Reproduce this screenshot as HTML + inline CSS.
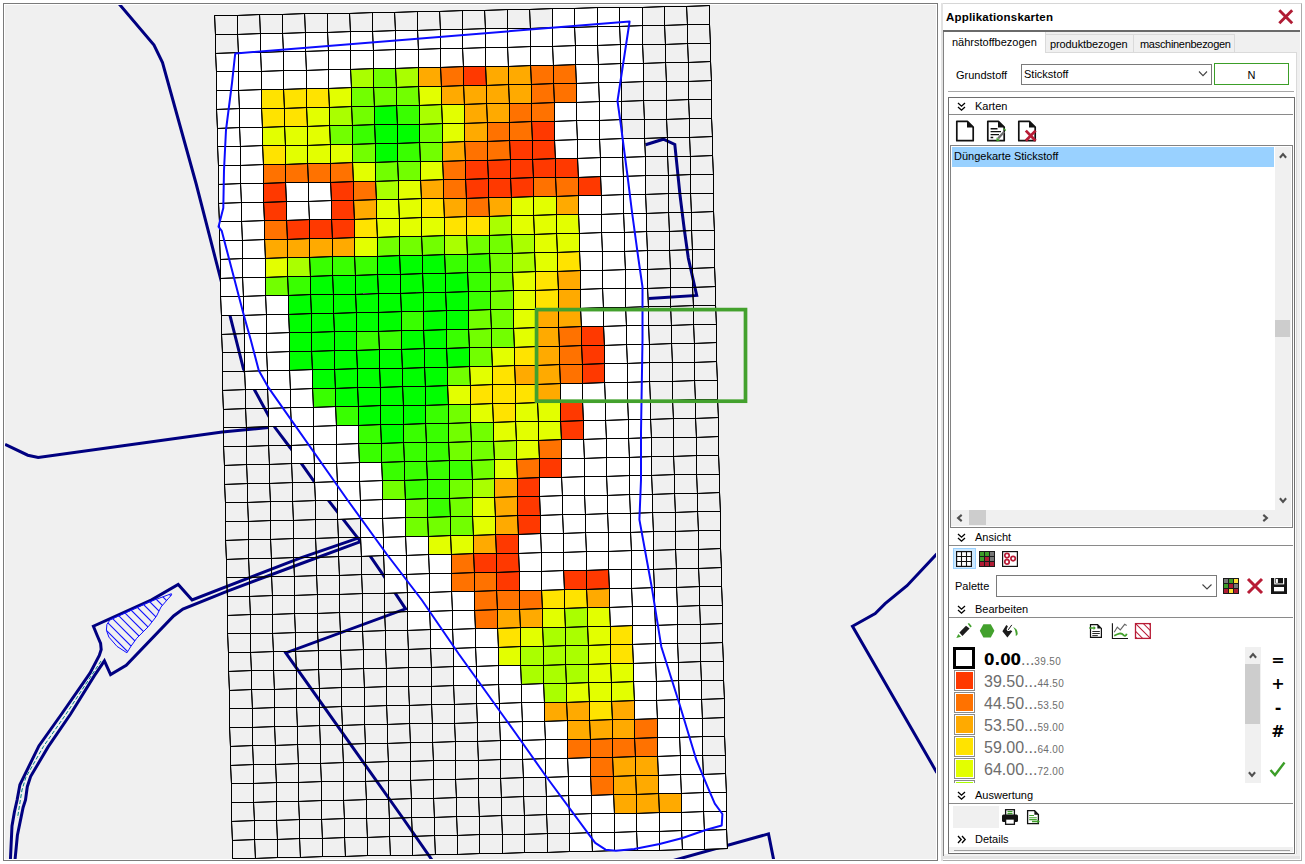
<!DOCTYPE html>
<html><head><meta charset="utf-8"><title>Applikationskarten</title>
<style>
html,body{margin:0;padding:0;background:#fff;}
body{width:1305px;height:864px;position:relative;overflow:hidden;font-family:"Liberation Sans",sans-serif;font-size:11px;color:#000;}
.abs,#rp div,#rp span,#rp svg{position:absolute;}
#mapframe{position:absolute;left:3px;top:3px;width:933px;height:856px;border:1px solid #7a7a7a;background:#fff;}
#mapbg{position:absolute;left:1px;top:1px;width:931px;height:854px;background:#f0f0f0;overflow:hidden;}
svg.map{position:absolute;left:0;top:0;}
#rp{position:absolute;left:0;top:0;width:1305px;height:864px;}
.t{white-space:nowrap;line-height:14px;height:14px;}
.hl{height:1px;background:#a0a0a0;}
.hd{font-size:11px;}
.leg{white-space:nowrap;color:#6d6d6d;font-size:16px;line-height:20px;height:20px;}
.leg small{font-size:10px;letter-spacing:0.35px;}
.sw{width:17px;height:17px;border:1px solid #fff;outline:1px solid #8a8a8a;}
.op{font-family:"DejaVu Sans",sans-serif;font-weight:bold;font-size:16px;line-height:20px;width:24px;text-align:center;}
</style></head><body>
<div id="mapframe"><div id="mapbg">
<svg class="map" width="932" height="855" viewBox="5 5 932 855">
<defs><clipPath id="hc"><polygon points="171.4,593.7 149.4,601.8 110.1,619.8 106.9,624.4 106.4,630.2 108.9,637.1 117,646.4 126.9,652.8 130.9,646.4 136.7,638.3 148.3,626.7 156.4,616.3 161,607 168,598.9 171.6,594.9"/></clipPath></defs>
<g fill="none" stroke="#000080" stroke-width="3" stroke-linejoin="miter">
<polyline points="115.8,0 154,45 162.5,62.5 181.2,130 196.2,184 220,276.5 230.2,316.3 243.5,369 255,390.8 267.5,413.8 274.8,427.3 290.4,448 313.3,480.4 329.6,501.9 358.8,539.4 383.8,575.8 405.6,608.8 285.8,652.9 403.5,819 432,860"/>
<polyline points="5.1,444.4 27.8,455.2 38.2,457.5 222.2,432 268.5,427.5"/>
<polyline points="358.8,537.9 300,558.2 192.1,599.9 178.2,584.4 151.6,599.9 93.4,626.2 97.4,636 100.6,643.5 101.2,649.5 99.3,655.5 90,673.1 61.6,714 38.9,745.9 19.9,784.8 17.1,800 14.4,812 12,826 10.4,860"/>
<polyline points="359.8,541.9 300,564 226.9,591.3 182.9,609.1 173.6,616 126.2,665.4 110.6,674.6 104.4,660.8 94.4,675.6 70.6,714 48.1,746.9 30.6,776.5 27.3,786.7 25.5,800 23.1,807.5 17.4,835.3 15,860"/>
<polyline points="936.9,553.8 907,585.7 885.1,603.6 875.2,613.5 852.5,626.3 936.9,772.7"/>
<polyline points="660,864.2 768.5,833.9 773.7,860"/>
<polyline points="645.6,144.8 663.3,139.2 674.8,144.4 680,195 684.2,228.8 688.3,258 696.7,295.4 648.8,298.5"/>
</g>
<polyline fill="none" stroke="#008080" stroke-width="1" stroke-dasharray="4 2" points="101,661 92.2,674.4 66.1,714 43.5,746.4 26,777 22,790 17.5,818"/>
<g clip-path="url(#hc)" stroke="#1010ff" stroke-width="1.15">
<line x1="-7" y1="580" x2="93" y2="680"/>
<line x1="2" y1="580" x2="102" y2="680"/>
<line x1="11" y1="580" x2="111" y2="680"/>
<line x1="20" y1="580" x2="120" y2="680"/>
<line x1="29" y1="580" x2="129" y2="680"/>
<line x1="38" y1="580" x2="138" y2="680"/>
<line x1="47" y1="580" x2="147" y2="680"/>
<line x1="56" y1="580" x2="156" y2="680"/>
<line x1="65" y1="580" x2="165" y2="680"/>
<line x1="74" y1="580" x2="174" y2="680"/>
<line x1="83" y1="580" x2="183" y2="680"/>
<line x1="92" y1="580" x2="192" y2="680"/>
<line x1="101" y1="580" x2="201" y2="680"/>
<line x1="110" y1="580" x2="210" y2="680"/>
<line x1="119" y1="580" x2="219" y2="680"/>
<line x1="128" y1="580" x2="228" y2="680"/>
<line x1="137" y1="580" x2="237" y2="680"/>
<line x1="146" y1="580" x2="246" y2="680"/>
<line x1="155" y1="580" x2="255" y2="680"/>
<line x1="164" y1="580" x2="264" y2="680"/>
<line x1="173" y1="580" x2="273" y2="680"/>
<line x1="182" y1="580" x2="282" y2="680"/>
<line x1="191" y1="580" x2="291" y2="680"/>
<line x1="200" y1="580" x2="300" y2="680"/>
<line x1="209" y1="580" x2="309" y2="680"/>
<line x1="218" y1="580" x2="318" y2="680"/>
<line x1="227" y1="580" x2="327" y2="680"/>
<line x1="236" y1="580" x2="336" y2="680"/>
<line x1="245" y1="580" x2="345" y2="680"/>
<line x1="254" y1="580" x2="354" y2="680"/>
<line x1="263" y1="580" x2="363" y2="680"/>
<line x1="272" y1="580" x2="372" y2="680"/>
</g>
<polygon fill="none" stroke="#1010ff" stroke-width="1" points="171.4,593.7 149.4,601.8 110.1,619.8 106.9,624.4 106.4,630.2 108.9,637.1 117,646.4 126.9,652.8 130.9,646.4 136.7,638.3 148.3,626.7 156.4,616.3 161,607 168,598.9 171.6,594.9"/>
<g shape-rendering="crispEdges">
<polygon fill="#ffffff" points="552.5,8.5 642.5,7.5 642.5,25.5 552.5,27.5"/>
<polygon fill="#ffffff" points="237.5,34.5 642.5,25.5 642.5,44.5 238.5,52.5"/>
<polygon fill="#ffffff" points="215.5,53.5 642.5,44.5 643.5,63.5 216.5,71.5"/>
<polygon fill="#ffffff" points="216.5,71.5 350.5,69.5 351.5,87.5 216.5,90.5"/>
<polygon fill="#aaff00" points="350.5,69.5 373.5,68.5 373.5,87.5 351.5,87.5"/>
<polygon fill="#72ff00" points="373.5,68.5 395.5,68.5 396.5,87.5 373.5,87.5"/>
<polygon fill="#aaff00" points="395.5,68.5 418.5,67.5 418.5,86.5 396.5,87.5"/>
<polygon fill="#ffaa00" points="418.5,67.5 440.5,67.5 441.5,86.5 418.5,86.5"/>
<polygon fill="#ff7200" points="440.5,67.5 463.5,66.5 463.5,85.5 441.5,86.5"/>
<polygon fill="#ff3900" points="463.5,66.5 485.5,66.5 486.5,85.5 463.5,85.5"/>
<polygon fill="#ffaa00" points="485.5,66.5 530.5,65.5 531.5,84.5 486.5,85.5"/>
<polygon fill="#ff7200" points="530.5,65.5 575.5,64.5 576.5,83.5 531.5,84.5"/>
<polygon fill="#ffffff" points="575.5,64.5 643.5,63.5 643.5,81.5 576.5,83.5"/>
<polygon fill="#ffffff" points="216.5,90.5 261.5,89.5 261.5,108.5 216.5,109.5"/>
<polygon fill="#ffe300" points="261.5,89.5 328.5,88.5 329.5,107.5 261.5,108.5"/>
<polygon fill="#e3ff00" points="328.5,88.5 351.5,87.5 351.5,106.5 329.5,107.5"/>
<polygon fill="#72ff00" points="351.5,87.5 418.5,86.5 419.5,105.5 351.5,106.5"/>
<polygon fill="#e3ff00" points="418.5,86.5 441.5,86.5 441.5,104.5 419.5,105.5"/>
<polygon fill="#ffaa00" points="441.5,86.5 531.5,84.5 531.5,103.5 441.5,104.5"/>
<polygon fill="#ff7200" points="531.5,84.5 576.5,83.5 576.5,102.5 531.5,103.5"/>
<polygon fill="#ffffff" points="576.5,83.5 621.5,82.5 621.5,101.5 576.5,102.5"/>
<polygon fill="#ffffff" points="216.5,109.5 261.5,108.5 262.5,127.5 217.5,128.5"/>
<polygon fill="#ffe300" points="261.5,108.5 306.5,107.5 307.5,126.5 262.5,127.5"/>
<polygon fill="#e3ff00" points="306.5,107.5 329.5,107.5 329.5,125.5 307.5,126.5"/>
<polygon fill="#aaff00" points="329.5,107.5 351.5,106.5 352.5,125.5 329.5,125.5"/>
<polygon fill="#72ff00" points="351.5,106.5 374.5,106.5 374.5,124.5 352.5,125.5"/>
<polygon fill="#00ff00" points="374.5,106.5 396.5,105.5 397.5,124.5 374.5,124.5"/>
<polygon fill="#39ff00" points="396.5,105.5 419.5,105.5 419.5,124.5 397.5,124.5"/>
<polygon fill="#aaff00" points="419.5,105.5 441.5,104.5 442.5,123.5 419.5,124.5"/>
<polygon fill="#e3ff00" points="441.5,104.5 464.5,104.5 464.5,123.5 442.5,123.5"/>
<polygon fill="#ffaa00" points="464.5,104.5 509.5,103.5 509.5,122.5 464.5,123.5"/>
<polygon fill="#ff7200" points="509.5,103.5 554.5,102.5 554.5,121.5 509.5,122.5"/>
<polygon fill="#ffffff" points="554.5,102.5 621.5,101.5 621.5,119.5 554.5,121.5"/>
<polygon fill="#ffffff" points="217.5,128.5 262.5,127.5 262.5,145.5 217.5,146.5"/>
<polygon fill="#e3ff00" points="262.5,127.5 329.5,125.5 330.5,144.5 262.5,145.5"/>
<polygon fill="#72ff00" points="329.5,125.5 352.5,125.5 352.5,144.5 330.5,144.5"/>
<polygon fill="#39ff00" points="352.5,125.5 374.5,124.5 375.5,143.5 352.5,144.5"/>
<polygon fill="#00ff00" points="374.5,124.5 419.5,124.5 419.5,142.5 375.5,143.5"/>
<polygon fill="#72ff00" points="419.5,124.5 442.5,123.5 442.5,142.5 419.5,142.5"/>
<polygon fill="#e3ff00" points="442.5,123.5 464.5,123.5 464.5,141.5 442.5,142.5"/>
<polygon fill="#ffaa00" points="464.5,123.5 487.5,122.5 487.5,141.5 464.5,141.5"/>
<polygon fill="#ff7200" points="487.5,122.5 531.5,121.5 532.5,140.5 487.5,141.5"/>
<polygon fill="#ff3900" points="531.5,121.5 554.5,121.5 554.5,140.5 532.5,140.5"/>
<polygon fill="#ffffff" points="554.5,121.5 621.5,119.5 622.5,138.5 554.5,140.5"/>
<polygon fill="#ffffff" points="217.5,146.5 262.5,145.5 263.5,164.5 218.5,165.5"/>
<polygon fill="#ffe300" points="262.5,145.5 285.5,145.5 285.5,164.5 263.5,164.5"/>
<polygon fill="#e3ff00" points="285.5,145.5 352.5,144.5 352.5,162.5 285.5,164.5"/>
<polygon fill="#72ff00" points="352.5,144.5 375.5,143.5 375.5,162.5 352.5,162.5"/>
<polygon fill="#00ff00" points="375.5,143.5 397.5,143.5 397.5,161.5 375.5,162.5"/>
<polygon fill="#39ff00" points="397.5,143.5 419.5,142.5 420.5,161.5 397.5,161.5"/>
<polygon fill="#72ff00" points="419.5,142.5 442.5,142.5 442.5,161.5 420.5,161.5"/>
<polygon fill="#ffaa00" points="442.5,142.5 464.5,141.5 465.5,160.5 442.5,161.5"/>
<polygon fill="#ff7200" points="464.5,141.5 509.5,140.5 510.5,159.5 465.5,160.5"/>
<polygon fill="#ff3900" points="509.5,140.5 554.5,140.5 555.5,158.5 510.5,159.5"/>
<polygon fill="#ffffff" points="554.5,140.5 644.5,138.5 645.5,156.5 555.5,158.5"/>
<polygon fill="#ffffff" points="218.5,165.5 263.5,164.5 263.5,183.5 218.5,184.5"/>
<polygon fill="#ff7200" points="263.5,164.5 352.5,162.5 353.5,181.5 263.5,183.5"/>
<polygon fill="#e3ff00" points="352.5,162.5 375.5,162.5 375.5,181.5 353.5,181.5"/>
<polygon fill="#72ff00" points="375.5,162.5 420.5,161.5 420.5,180.5 375.5,181.5"/>
<polygon fill="#e3ff00" points="420.5,161.5 442.5,161.5 443.5,179.5 420.5,180.5"/>
<polygon fill="#ff7200" points="442.5,161.5 465.5,160.5 465.5,179.5 443.5,179.5"/>
<polygon fill="#ff3900" points="465.5,160.5 577.5,158.5 578.5,177.5 465.5,179.5"/>
<polygon fill="#ffffff" points="577.5,158.5 645.5,156.5 645.5,175.5 578.5,177.5"/>
<polygon fill="#ffffff" points="218.5,184.5 263.5,183.5 263.5,202.5 218.5,203.5"/>
<polygon fill="#ff3900" points="263.5,183.5 285.5,182.5 286.5,201.5 263.5,202.5"/>
<polygon fill="#ffffff" points="285.5,182.5 330.5,182.5 331.5,200.5 286.5,201.5"/>
<polygon fill="#ff3900" points="330.5,182.5 353.5,181.5 353.5,200.5 331.5,200.5"/>
<polygon fill="#ff7200" points="353.5,181.5 375.5,181.5 376.5,199.5 353.5,200.5"/>
<polygon fill="#aaff00" points="375.5,181.5 398.5,180.5 398.5,199.5 376.5,199.5"/>
<polygon fill="#e3ff00" points="398.5,180.5 420.5,180.5 421.5,198.5 398.5,199.5"/>
<polygon fill="#ffaa00" points="420.5,180.5 443.5,179.5 443.5,198.5 421.5,198.5"/>
<polygon fill="#ff7200" points="443.5,179.5 465.5,179.5 466.5,198.5 443.5,198.5"/>
<polygon fill="#ff3900" points="465.5,179.5 533.5,177.5 533.5,196.5 466.5,198.5"/>
<polygon fill="#ff7200" points="533.5,177.5 578.5,177.5 578.5,195.5 533.5,196.5"/>
<polygon fill="#ff3900" points="578.5,177.5 600.5,176.5 601.5,195.5 578.5,195.5"/>
<polygon fill="#ffffff" points="600.5,176.5 645.5,175.5 645.5,194.5 601.5,195.5"/>
<polygon fill="#ffffff" points="218.5,203.5 263.5,202.5 264.5,220.5 219.5,221.5"/>
<polygon fill="#ff3900" points="263.5,202.5 286.5,201.5 286.5,220.5 264.5,220.5"/>
<polygon fill="#ffffff" points="286.5,201.5 331.5,200.5 331.5,219.5 286.5,220.5"/>
<polygon fill="#ff3900" points="331.5,200.5 353.5,200.5 354.5,219.5 331.5,219.5"/>
<polygon fill="#ffaa00" points="353.5,200.5 376.5,199.5 376.5,218.5 354.5,219.5"/>
<polygon fill="#e3ff00" points="376.5,199.5 421.5,198.5 421.5,217.5 376.5,218.5"/>
<polygon fill="#ffe300" points="421.5,198.5 443.5,198.5 444.5,217.5 421.5,217.5"/>
<polygon fill="#ffaa00" points="443.5,198.5 466.5,198.5 466.5,216.5 444.5,217.5"/>
<polygon fill="#ff7200" points="466.5,198.5 488.5,197.5 489.5,216.5 466.5,216.5"/>
<polygon fill="#ffaa00" points="488.5,197.5 511.5,197.5 511.5,215.5 489.5,216.5"/>
<polygon fill="#e3ff00" points="511.5,197.5 556.5,196.5 556.5,214.5 511.5,215.5"/>
<polygon fill="#ffaa00" points="556.5,196.5 578.5,195.5 578.5,214.5 556.5,214.5"/>
<polygon fill="#ffffff" points="578.5,195.5 645.5,194.5 646.5,213.5 578.5,214.5"/>
<polygon fill="#ffffff" points="219.5,221.5 264.5,220.5 264.5,239.5 219.5,240.5"/>
<polygon fill="#ff7200" points="264.5,220.5 286.5,220.5 287.5,239.5 264.5,239.5"/>
<polygon fill="#ff3900" points="286.5,220.5 354.5,219.5 354.5,237.5 287.5,239.5"/>
<polygon fill="#ffe300" points="354.5,219.5 376.5,218.5 377.5,237.5 354.5,237.5"/>
<polygon fill="#e3ff00" points="376.5,218.5 444.5,217.5 444.5,235.5 377.5,237.5"/>
<polygon fill="#ffe300" points="444.5,217.5 489.5,216.5 489.5,235.5 444.5,235.5"/>
<polygon fill="#aaff00" points="489.5,216.5 511.5,215.5 511.5,234.5 489.5,235.5"/>
<polygon fill="#e3ff00" points="511.5,215.5 578.5,214.5 579.5,233.5 511.5,234.5"/>
<polygon fill="#ffffff" points="578.5,214.5 646.5,213.5 646.5,231.5 579.5,233.5"/>
<polygon fill="#ffffff" points="219.5,240.5 264.5,239.5 265.5,258.5 220.5,259.5"/>
<polygon fill="#ffaa00" points="264.5,239.5 354.5,237.5 354.5,256.5 265.5,258.5"/>
<polygon fill="#e3ff00" points="354.5,237.5 377.5,237.5 377.5,256.5 354.5,256.5"/>
<polygon fill="#72ff00" points="377.5,237.5 444.5,235.5 444.5,254.5 377.5,256.5"/>
<polygon fill="#aaff00" points="444.5,235.5 466.5,235.5 467.5,254.5 444.5,254.5"/>
<polygon fill="#72ff00" points="466.5,235.5 511.5,234.5 512.5,253.5 467.5,254.5"/>
<polygon fill="#aaff00" points="511.5,234.5 534.5,234.5 534.5,252.5 512.5,253.5"/>
<polygon fill="#e3ff00" points="534.5,234.5 579.5,233.5 579.5,251.5 534.5,252.5"/>
<polygon fill="#ffffff" points="579.5,233.5 646.5,231.5 647.5,250.5 579.5,251.5"/>
<polygon fill="#ffffff" points="220.5,259.5 265.5,258.5 265.5,277.5 220.5,278.5"/>
<polygon fill="#e3ff00" points="265.5,258.5 287.5,257.5 287.5,276.5 265.5,277.5"/>
<polygon fill="#aaff00" points="287.5,257.5 309.5,257.5 310.5,276.5 287.5,276.5"/>
<polygon fill="#39ff00" points="309.5,257.5 377.5,256.5 377.5,274.5 310.5,276.5"/>
<polygon fill="#00ff00" points="377.5,256.5 444.5,254.5 445.5,273.5 377.5,274.5"/>
<polygon fill="#39ff00" points="444.5,254.5 489.5,253.5 490.5,272.5 445.5,273.5"/>
<polygon fill="#72ff00" points="489.5,253.5 512.5,253.5 512.5,272.5 490.5,272.5"/>
<polygon fill="#aaff00" points="512.5,253.5 534.5,252.5 535.5,271.5 512.5,272.5"/>
<polygon fill="#e3ff00" points="534.5,252.5 557.5,252.5 557.5,271.5 535.5,271.5"/>
<polygon fill="#ffe300" points="557.5,252.5 579.5,251.5 580.5,270.5 557.5,271.5"/>
<polygon fill="#ffffff" points="579.5,251.5 647.5,250.5 647.5,269.5 580.5,270.5"/>
<polygon fill="#ffffff" points="220.5,278.5 265.5,277.5 265.5,295.5 220.5,296.5"/>
<polygon fill="#72ff00" points="265.5,277.5 287.5,276.5 288.5,295.5 265.5,295.5"/>
<polygon fill="#39ff00" points="287.5,276.5 310.5,276.5 310.5,294.5 288.5,295.5"/>
<polygon fill="#00ff00" points="310.5,276.5 467.5,272.5 468.5,291.5 310.5,294.5"/>
<polygon fill="#39ff00" points="467.5,272.5 490.5,272.5 490.5,291.5 468.5,291.5"/>
<polygon fill="#72ff00" points="490.5,272.5 512.5,272.5 513.5,290.5 490.5,291.5"/>
<polygon fill="#e3ff00" points="512.5,272.5 535.5,271.5 535.5,290.5 513.5,290.5"/>
<polygon fill="#ffe300" points="535.5,271.5 557.5,271.5 558.5,289.5 535.5,290.5"/>
<polygon fill="#ffaa00" points="557.5,271.5 580.5,270.5 580.5,289.5 558.5,289.5"/>
<polygon fill="#ffffff" points="580.5,270.5 647.5,269.5 647.5,288.5 580.5,289.5"/>
<polygon fill="#ffffff" points="220.5,296.5 288.5,295.5 288.5,314.5 221.5,315.5"/>
<polygon fill="#00ff00" points="288.5,295.5 468.5,291.5 468.5,310.5 288.5,314.5"/>
<polygon fill="#39ff00" points="468.5,291.5 490.5,291.5 490.5,309.5 468.5,310.5"/>
<polygon fill="#72ff00" points="490.5,291.5 513.5,290.5 513.5,309.5 490.5,309.5"/>
<polygon fill="#e3ff00" points="513.5,290.5 535.5,290.5 535.5,309.5 513.5,309.5"/>
<polygon fill="#ffe300" points="535.5,290.5 558.5,289.5 558.5,308.5 535.5,309.5"/>
<polygon fill="#ffaa00" points="558.5,289.5 580.5,289.5 580.5,308.5 558.5,308.5"/>
<polygon fill="#ffffff" points="580.5,289.5 647.5,288.5 648.5,306.5 580.5,308.5"/>
<polygon fill="#ffffff" points="243.5,315.5 288.5,314.5 289.5,332.5 244.5,333.5"/>
<polygon fill="#00ff00" points="288.5,314.5 401.5,311.5 401.5,330.5 289.5,332.5"/>
<polygon fill="#39ff00" points="401.5,311.5 423.5,311.5 423.5,330.5 401.5,330.5"/>
<polygon fill="#00ff00" points="423.5,311.5 468.5,310.5 468.5,329.5 423.5,330.5"/>
<polygon fill="#72ff00" points="468.5,310.5 513.5,309.5 513.5,328.5 468.5,329.5"/>
<polygon fill="#e3ff00" points="513.5,309.5 535.5,309.5 536.5,327.5 513.5,328.5"/>
<polygon fill="#ffaa00" points="535.5,309.5 580.5,308.5 581.5,326.5 536.5,327.5"/>
<polygon fill="#ffffff" points="580.5,308.5 648.5,306.5 648.5,325.5 581.5,326.5"/>
<polygon fill="#ffffff" points="244.5,333.5 289.5,332.5 289.5,351.5 244.5,352.5"/>
<polygon fill="#00ff00" points="289.5,332.5 356.5,331.5 356.5,350.5 289.5,351.5"/>
<polygon fill="#39ff00" points="356.5,331.5 401.5,330.5 401.5,349.5 356.5,350.5"/>
<polygon fill="#00ff00" points="401.5,330.5 446.5,329.5 446.5,348.5 401.5,349.5"/>
<polygon fill="#39ff00" points="446.5,329.5 468.5,329.5 469.5,347.5 446.5,348.5"/>
<polygon fill="#72ff00" points="468.5,329.5 513.5,328.5 514.5,347.5 469.5,347.5"/>
<polygon fill="#e3ff00" points="513.5,328.5 536.5,327.5 536.5,346.5 514.5,347.5"/>
<polygon fill="#ffaa00" points="536.5,327.5 558.5,327.5 559.5,346.5 536.5,346.5"/>
<polygon fill="#ff7200" points="558.5,327.5 581.5,326.5 581.5,345.5 559.5,346.5"/>
<polygon fill="#ff3900" points="581.5,326.5 603.5,326.5 604.5,345.5 581.5,345.5"/>
<polygon fill="#ffffff" points="603.5,326.5 648.5,325.5 649.5,344.5 604.5,345.5"/>
<polygon fill="#ffffff" points="244.5,352.5 289.5,351.5 289.5,370.5 244.5,371.5"/>
<polygon fill="#00ff00" points="289.5,351.5 469.5,347.5 469.5,366.5 289.5,370.5"/>
<polygon fill="#72ff00" points="469.5,347.5 491.5,347.5 492.5,366.5 469.5,366.5"/>
<polygon fill="#e3ff00" points="491.5,347.5 514.5,347.5 514.5,365.5 492.5,366.5"/>
<polygon fill="#ffe300" points="514.5,347.5 536.5,346.5 537.5,365.5 514.5,365.5"/>
<polygon fill="#ffaa00" points="536.5,346.5 559.5,346.5 559.5,364.5 537.5,365.5"/>
<polygon fill="#ff7200" points="559.5,346.5 581.5,345.5 582.5,364.5 559.5,364.5"/>
<polygon fill="#ff3900" points="581.5,345.5 604.5,345.5 604.5,363.5 582.5,364.5"/>
<polygon fill="#ffffff" points="604.5,345.5 649.5,344.5 649.5,362.5 604.5,363.5"/>
<polygon fill="#ffffff" points="244.5,371.5 312.5,369.5 312.5,388.5 245.5,389.5"/>
<polygon fill="#00ff00" points="312.5,369.5 447.5,367.5 447.5,385.5 312.5,388.5"/>
<polygon fill="#72ff00" points="447.5,367.5 469.5,366.5 470.5,385.5 447.5,385.5"/>
<polygon fill="#e3ff00" points="469.5,366.5 492.5,366.5 492.5,384.5 470.5,385.5"/>
<polygon fill="#ffe300" points="492.5,366.5 514.5,365.5 515.5,384.5 492.5,384.5"/>
<polygon fill="#ffaa00" points="514.5,365.5 559.5,364.5 560.5,383.5 515.5,384.5"/>
<polygon fill="#ff7200" points="559.5,364.5 582.5,364.5 582.5,383.5 560.5,383.5"/>
<polygon fill="#ff3900" points="582.5,364.5 604.5,363.5 604.5,382.5 582.5,383.5"/>
<polygon fill="#ffffff" points="604.5,363.5 649.5,362.5 649.5,381.5 604.5,382.5"/>
<polygon fill="#ffffff" points="267.5,389.5 312.5,388.5 313.5,407.5 268.5,408.5"/>
<polygon fill="#39ff00" points="312.5,388.5 335.5,388.5 335.5,406.5 313.5,407.5"/>
<polygon fill="#00ff00" points="335.5,388.5 447.5,385.5 448.5,404.5 335.5,406.5"/>
<polygon fill="#e3ff00" points="447.5,385.5 470.5,385.5 470.5,404.5 448.5,404.5"/>
<polygon fill="#ffe300" points="470.5,385.5 537.5,384.5 537.5,402.5 470.5,404.5"/>
<polygon fill="#ffaa00" points="537.5,384.5 560.5,383.5 560.5,402.5 537.5,402.5"/>
<polygon fill="#ffffff" points="560.5,383.5 649.5,381.5 650.5,400.5 560.5,402.5"/>
<polygon fill="#ffffff" points="268.5,408.5 335.5,406.5 336.5,425.5 268.5,426.5"/>
<polygon fill="#39ff00" points="335.5,406.5 358.5,406.5 358.5,425.5 336.5,425.5"/>
<polygon fill="#00ff00" points="358.5,406.5 425.5,405.5 425.5,423.5 358.5,425.5"/>
<polygon fill="#39ff00" points="425.5,405.5 448.5,404.5 448.5,423.5 425.5,423.5"/>
<polygon fill="#72ff00" points="448.5,404.5 470.5,404.5 470.5,422.5 448.5,423.5"/>
<polygon fill="#e3ff00" points="470.5,404.5 492.5,403.5 493.5,422.5 470.5,422.5"/>
<polygon fill="#ffe300" points="492.5,403.5 515.5,403.5 515.5,421.5 493.5,422.5"/>
<polygon fill="#e3ff00" points="515.5,403.5 560.5,402.5 560.5,421.5 515.5,421.5"/>
<polygon fill="#ff3900" points="560.5,402.5 582.5,401.5 583.5,420.5 560.5,421.5"/>
<polygon fill="#ffffff" points="582.5,401.5 650.5,400.5 650.5,419.5 583.5,420.5"/>
<polygon fill="#ffffff" points="291.5,426.5 358.5,425.5 358.5,443.5 291.5,445.5"/>
<polygon fill="#39ff00" points="358.5,425.5 380.5,424.5 381.5,443.5 358.5,443.5"/>
<polygon fill="#00ff00" points="380.5,424.5 403.5,424.5 403.5,442.5 381.5,443.5"/>
<polygon fill="#39ff00" points="403.5,424.5 448.5,423.5 448.5,442.5 403.5,442.5"/>
<polygon fill="#72ff00" points="448.5,423.5 493.5,422.5 493.5,441.5 448.5,442.5"/>
<polygon fill="#e3ff00" points="493.5,422.5 560.5,421.5 561.5,439.5 493.5,441.5"/>
<polygon fill="#ff3900" points="560.5,421.5 583.5,420.5 583.5,439.5 561.5,439.5"/>
<polygon fill="#ffffff" points="583.5,420.5 650.5,419.5 651.5,437.5 583.5,439.5"/>
<polygon fill="#ffffff" points="291.5,445.5 358.5,443.5 359.5,462.5 291.5,463.5"/>
<polygon fill="#39ff00" points="358.5,443.5 448.5,442.5 449.5,460.5 359.5,462.5"/>
<polygon fill="#72ff00" points="448.5,442.5 493.5,441.5 494.5,459.5 449.5,460.5"/>
<polygon fill="#aaff00" points="493.5,441.5 516.5,440.5 516.5,459.5 494.5,459.5"/>
<polygon fill="#e3ff00" points="516.5,440.5 538.5,440.5 539.5,458.5 516.5,459.5"/>
<polygon fill="#ff7200" points="538.5,440.5 561.5,439.5 561.5,458.5 539.5,458.5"/>
<polygon fill="#ffffff" points="561.5,439.5 651.5,437.5 651.5,456.5 561.5,458.5"/>
<polygon fill="#ffffff" points="314.5,463.5 381.5,462.5 382.5,480.5 314.5,482.5"/>
<polygon fill="#39ff00" points="381.5,462.5 471.5,460.5 472.5,479.5 382.5,480.5"/>
<polygon fill="#72ff00" points="471.5,460.5 494.5,459.5 494.5,478.5 472.5,479.5"/>
<polygon fill="#e3ff00" points="494.5,459.5 516.5,459.5 517.5,478.5 494.5,478.5"/>
<polygon fill="#ff7200" points="516.5,459.5 539.5,458.5 539.5,477.5 517.5,478.5"/>
<polygon fill="#ff3900" points="539.5,458.5 561.5,458.5 561.5,477.5 539.5,477.5"/>
<polygon fill="#ffffff" points="561.5,458.5 651.5,456.5 651.5,475.5 561.5,477.5"/>
<polygon fill="#ffffff" points="314.5,482.5 382.5,480.5 382.5,499.5 315.5,500.5"/>
<polygon fill="#72ff00" points="382.5,480.5 404.5,480.5 405.5,499.5 382.5,499.5"/>
<polygon fill="#39ff00" points="404.5,480.5 449.5,479.5 449.5,498.5 405.5,499.5"/>
<polygon fill="#72ff00" points="449.5,479.5 472.5,479.5 472.5,497.5 449.5,498.5"/>
<polygon fill="#aaff00" points="472.5,479.5 494.5,478.5 494.5,497.5 472.5,497.5"/>
<polygon fill="#ffaa00" points="494.5,478.5 517.5,478.5 517.5,496.5 494.5,497.5"/>
<polygon fill="#ff3900" points="517.5,478.5 539.5,477.5 539.5,496.5 517.5,496.5"/>
<polygon fill="#ffffff" points="539.5,477.5 651.5,475.5 652.5,494.5 539.5,496.5"/>
<polygon fill="#ffffff" points="337.5,500.5 405.5,499.5 405.5,517.5 337.5,519.5"/>
<polygon fill="#72ff00" points="405.5,499.5 427.5,498.5 427.5,517.5 405.5,517.5"/>
<polygon fill="#39ff00" points="427.5,498.5 449.5,498.5 450.5,516.5 427.5,517.5"/>
<polygon fill="#72ff00" points="449.5,498.5 472.5,497.5 472.5,516.5 450.5,516.5"/>
<polygon fill="#e3ff00" points="472.5,497.5 494.5,497.5 495.5,516.5 472.5,516.5"/>
<polygon fill="#ffaa00" points="494.5,497.5 517.5,496.5 517.5,515.5 495.5,516.5"/>
<polygon fill="#ff3900" points="517.5,496.5 539.5,496.5 540.5,515.5 517.5,515.5"/>
<polygon fill="#ffffff" points="539.5,496.5 652.5,494.5 652.5,512.5 540.5,515.5"/>
<polygon fill="#ffffff" points="360.5,518.5 405.5,517.5 405.5,536.5 360.5,537.5"/>
<polygon fill="#72ff00" points="405.5,517.5 472.5,516.5 473.5,535.5 405.5,536.5"/>
<polygon fill="#e3ff00" points="472.5,516.5 495.5,516.5 495.5,534.5 473.5,535.5"/>
<polygon fill="#ffaa00" points="495.5,516.5 517.5,515.5 518.5,534.5 495.5,534.5"/>
<polygon fill="#ff3900" points="517.5,515.5 540.5,515.5 540.5,533.5 518.5,534.5"/>
<polygon fill="#ffffff" points="540.5,515.5 652.5,512.5 653.5,531.5 540.5,533.5"/>
<polygon fill="#ffffff" points="360.5,537.5 428.5,536.5 428.5,554.5 361.5,556.5"/>
<polygon fill="#e3ff00" points="428.5,536.5 473.5,535.5 473.5,553.5 428.5,554.5"/>
<polygon fill="#ffaa00" points="473.5,535.5 495.5,534.5 496.5,553.5 473.5,553.5"/>
<polygon fill="#ff3900" points="495.5,534.5 518.5,534.5 518.5,553.5 496.5,553.5"/>
<polygon fill="#ffffff" points="518.5,534.5 653.5,531.5 653.5,550.5 518.5,553.5"/>
<polygon fill="#ffffff" points="383.5,555.5 451.5,554.5 451.5,573.5 384.5,574.5"/>
<polygon fill="#ff7200" points="451.5,554.5 473.5,553.5 474.5,572.5 451.5,573.5"/>
<polygon fill="#ff3900" points="473.5,553.5 518.5,553.5 519.5,571.5 474.5,572.5"/>
<polygon fill="#ffffff" points="518.5,553.5 653.5,550.5 653.5,569.5 519.5,571.5"/>
<polygon fill="#ffffff" points="384.5,574.5 451.5,573.5 451.5,591.5 384.5,593.5"/>
<polygon fill="#ff7200" points="451.5,573.5 496.5,572.5 496.5,590.5 451.5,591.5"/>
<polygon fill="#ff3900" points="496.5,572.5 519.5,571.5 519.5,590.5 496.5,590.5"/>
<polygon fill="#ffffff" points="519.5,571.5 563.5,570.5 564.5,589.5 519.5,590.5"/>
<polygon fill="#ff3900" points="563.5,570.5 608.5,569.5 609.5,588.5 564.5,589.5"/>
<polygon fill="#ffffff" points="608.5,569.5 653.5,569.5 654.5,587.5 609.5,588.5"/>
<polygon fill="#ffffff" points="407.5,592.5 474.5,591.5 474.5,610.5 407.5,611.5"/>
<polygon fill="#ff7200" points="474.5,591.5 541.5,590.5 542.5,608.5 474.5,610.5"/>
<polygon fill="#ffe300" points="541.5,590.5 586.5,589.5 587.5,607.5 542.5,608.5"/>
<polygon fill="#ffaa00" points="586.5,589.5 609.5,588.5 609.5,607.5 587.5,607.5"/>
<polygon fill="#ffffff" points="609.5,588.5 676.5,587.5 677.5,606.5 609.5,607.5"/>
<polygon fill="#ffffff" points="407.5,611.5 474.5,610.5 475.5,628.5 407.5,630.5"/>
<polygon fill="#ff7200" points="474.5,610.5 497.5,609.5 497.5,628.5 475.5,628.5"/>
<polygon fill="#ffaa00" points="497.5,609.5 542.5,608.5 542.5,627.5 497.5,628.5"/>
<polygon fill="#e3ff00" points="542.5,608.5 564.5,608.5 565.5,627.5 542.5,627.5"/>
<polygon fill="#aaff00" points="564.5,608.5 587.5,607.5 587.5,626.5 565.5,627.5"/>
<polygon fill="#e3ff00" points="587.5,607.5 609.5,607.5 610.5,626.5 587.5,626.5"/>
<polygon fill="#ffffff" points="609.5,607.5 677.5,606.5 677.5,624.5 610.5,626.5"/>
<polygon fill="#ffffff" points="430.5,629.5 497.5,628.5 498.5,647.5 430.5,648.5"/>
<polygon fill="#ffe300" points="497.5,628.5 520.5,627.5 520.5,646.5 498.5,647.5"/>
<polygon fill="#e3ff00" points="520.5,627.5 542.5,627.5 543.5,646.5 520.5,646.5"/>
<polygon fill="#aaff00" points="542.5,627.5 587.5,626.5 588.5,645.5 543.5,646.5"/>
<polygon fill="#e3ff00" points="587.5,626.5 610.5,626.5 610.5,644.5 588.5,645.5"/>
<polygon fill="#ffe300" points="610.5,626.5 632.5,625.5 632.5,644.5 610.5,644.5"/>
<polygon fill="#ffffff" points="632.5,625.5 677.5,624.5 677.5,643.5 632.5,644.5"/>
<polygon fill="#ffffff" points="453.5,648.5 498.5,647.5 498.5,665.5 453.5,666.5"/>
<polygon fill="#e3ff00" points="498.5,647.5 520.5,646.5 520.5,665.5 498.5,665.5"/>
<polygon fill="#aaff00" points="520.5,646.5 588.5,645.5 588.5,664.5 520.5,665.5"/>
<polygon fill="#e3ff00" points="588.5,645.5 610.5,644.5 610.5,663.5 588.5,664.5"/>
<polygon fill="#ffe300" points="610.5,644.5 632.5,644.5 633.5,663.5 610.5,663.5"/>
<polygon fill="#ffffff" points="632.5,644.5 677.5,643.5 678.5,662.5 633.5,663.5"/>
<polygon fill="#ffffff" points="453.5,666.5 520.5,665.5 521.5,684.5 453.5,685.5"/>
<polygon fill="#aaff00" points="520.5,665.5 588.5,664.5 588.5,682.5 521.5,684.5"/>
<polygon fill="#e3ff00" points="588.5,664.5 633.5,663.5 633.5,681.5 588.5,682.5"/>
<polygon fill="#ffffff" points="633.5,663.5 678.5,662.5 678.5,680.5 633.5,681.5"/>
<polygon fill="#ffffff" points="476.5,685.5 543.5,683.5 544.5,702.5 476.5,703.5"/>
<polygon fill="#aaff00" points="543.5,683.5 566.5,683.5 566.5,702.5 544.5,702.5"/>
<polygon fill="#e3ff00" points="566.5,683.5 633.5,681.5 634.5,700.5 566.5,702.5"/>
<polygon fill="#ffffff" points="633.5,681.5 701.5,680.5 701.5,699.5 634.5,700.5"/>
<polygon fill="#ffffff" points="476.5,703.5 544.5,702.5 544.5,721.5 477.5,722.5"/>
<polygon fill="#ffaa00" points="544.5,702.5 589.5,701.5 589.5,720.5 544.5,721.5"/>
<polygon fill="#ffe300" points="589.5,701.5 611.5,701.5 612.5,719.5 589.5,720.5"/>
<polygon fill="#ffaa00" points="611.5,701.5 634.5,700.5 634.5,719.5 612.5,719.5"/>
<polygon fill="#ffffff" points="634.5,700.5 701.5,699.5 702.5,718.5 634.5,719.5"/>
<polygon fill="#ffffff" points="499.5,722.5 567.5,720.5 567.5,739.5 500.5,740.5"/>
<polygon fill="#ffaa00" points="567.5,720.5 634.5,719.5 634.5,738.5 567.5,739.5"/>
<polygon fill="#ff7200" points="634.5,719.5 657.5,718.5 657.5,737.5 634.5,738.5"/>
<polygon fill="#ffffff" points="657.5,718.5 702.5,718.5 702.5,736.5 657.5,737.5"/>
<polygon fill="#ffffff" points="500.5,740.5 567.5,739.5 567.5,758.5 500.5,759.5"/>
<polygon fill="#ff7200" points="567.5,739.5 657.5,737.5 657.5,756.5 567.5,758.5"/>
<polygon fill="#ffffff" points="657.5,737.5 702.5,736.5 702.5,755.5 657.5,756.5"/>
<polygon fill="#ffffff" points="522.5,759.5 590.5,757.5 590.5,776.5 523.5,777.5"/>
<polygon fill="#ff7200" points="590.5,757.5 612.5,757.5 613.5,776.5 590.5,776.5"/>
<polygon fill="#ffaa00" points="612.5,757.5 657.5,756.5 658.5,775.5 613.5,776.5"/>
<polygon fill="#ffffff" points="657.5,756.5 702.5,755.5 703.5,774.5 658.5,775.5"/>
<polygon fill="#ffffff" points="545.5,777.5 590.5,776.5 591.5,795.5 546.5,796.5"/>
<polygon fill="#ff7200" points="590.5,776.5 613.5,776.5 613.5,794.5 591.5,795.5"/>
<polygon fill="#ffaa00" points="613.5,776.5 658.5,775.5 658.5,793.5 613.5,794.5"/>
<polygon fill="#ffffff" points="658.5,775.5 725.5,773.5 726.5,792.5 658.5,793.5"/>
<polygon fill="#ffffff" points="546.5,796.5 613.5,794.5 614.5,813.5 546.5,814.5"/>
<polygon fill="#ffaa00" points="613.5,794.5 681.5,793.5 681.5,812.5 614.5,813.5"/>
<polygon fill="#ffffff" points="681.5,793.5 726.5,792.5 726.5,811.5 681.5,812.5"/>
<polygon fill="#ffffff" points="569.5,814.5 726.5,811.5 726.5,829.5 569.5,833.5"/>
<polygon fill="#ffffff" points="569.5,833.5 726.5,829.5 727.5,848.5 569.5,851.5"/>
</g>
<path id="gp" fill="none" stroke="#000" stroke-width="1" stroke-linejoin="round" d="M214.5 15.5L237.5 15.5L259.5 14.5L282.5 14.5L304.5 13.5L327.5 13.5L349.5 13.5L372.5 12.5L394.5 12.5L417.5 11.5L439.5 11.5L462.5 10.5L484.5 10.5L507.5 9.5L529.5 9.5L552.5 8.5L574.5 8.5L597.5 7.5L619.5 7.5L642.5 7.5L664.5 6.5L686.5 6.5L709.5 5.5M215.5 34.5L237.5 34.5L260.5 33.5L282.5 33.5L305.5 32.5L327.5 32.5L350.5 31.5L372.5 31.5L395.5 30.5L417.5 30.5L440.5 29.5L462.5 29.5L485.5 28.5L507.5 28.5L530.5 28.5L552.5 27.5L574.5 27.5L597.5 26.5L619.5 26.5L642.5 25.5L664.5 25.5L687.5 24.5L709.5 24.5M215.5 53.5L238.5 52.5L260.5 52.5L283.5 51.5L305.5 51.5L328.5 50.5L350.5 50.5L373.5 50.5L395.5 49.5L418.5 49.5L440.5 48.5L462.5 48.5L485.5 47.5L507.5 47.5L530.5 46.5L552.5 46.5L575.5 45.5L597.5 45.5L620.5 44.5L642.5 44.5L665.5 44.5L687.5 43.5L710.5 43.5M216.5 71.5L238.5 71.5L261.5 71.5L283.5 70.5L306.5 70.5L328.5 69.5L350.5 69.5L373.5 68.5L395.5 68.5L418.5 67.5L440.5 67.5L463.5 66.5L485.5 66.5L508.5 66.5L530.5 65.5L553.5 65.5L575.5 64.5L598.5 64.5L620.5 63.5L643.5 63.5L665.5 62.5L688.5 62.5L710.5 61.5M216.5 90.5L238.5 90.5L261.5 89.5L283.5 89.5L306.5 88.5L328.5 88.5L351.5 87.5L373.5 87.5L396.5 87.5L418.5 86.5L441.5 86.5L463.5 85.5L486.5 85.5L508.5 84.5L531.5 84.5L553.5 83.5L576.5 83.5L598.5 82.5L621.5 82.5L643.5 81.5L666.5 81.5L688.5 81.5L711.5 80.5M216.5 109.5L239.5 108.5L261.5 108.5L284.5 108.5L306.5 107.5L329.5 107.5L351.5 106.5L374.5 106.5L396.5 105.5L419.5 105.5L441.5 104.5L464.5 104.5L486.5 103.5L509.5 103.5L531.5 103.5L554.5 102.5L576.5 102.5L599.5 101.5L621.5 101.5L643.5 100.5L666.5 100.5L688.5 99.5L711.5 99.5M217.5 128.5L239.5 127.5L262.5 127.5L284.5 126.5L307.5 126.5L329.5 125.5L352.5 125.5L374.5 124.5L397.5 124.5L419.5 124.5L442.5 123.5L464.5 123.5L487.5 122.5L509.5 122.5L531.5 121.5L554.5 121.5L576.5 120.5L599.5 120.5L621.5 119.5L644.5 119.5L666.5 119.5L689.5 118.5L711.5 118.5M217.5 146.5L240.5 146.5L262.5 145.5L285.5 145.5L307.5 145.5L330.5 144.5L352.5 144.5L375.5 143.5L397.5 143.5L419.5 142.5L442.5 142.5L464.5 141.5L487.5 141.5L509.5 140.5L532.5 140.5L554.5 140.5L577.5 139.5L599.5 139.5L622.5 138.5L644.5 138.5L667.5 137.5L689.5 137.5L712.5 136.5M218.5 165.5L240.5 165.5L263.5 164.5L285.5 164.5L307.5 163.5L330.5 163.5L352.5 162.5L375.5 162.5L397.5 161.5L420.5 161.5L442.5 161.5L465.5 160.5L487.5 160.5L510.5 159.5L532.5 159.5L555.5 158.5L577.5 158.5L600.5 157.5L622.5 157.5L645.5 156.5L667.5 156.5L690.5 156.5L712.5 155.5M218.5 184.5L240.5 183.5L263.5 183.5L285.5 182.5L308.5 182.5L330.5 182.5L353.5 181.5L375.5 181.5L398.5 180.5L420.5 180.5L443.5 179.5L465.5 179.5L488.5 178.5L510.5 178.5L533.5 177.5L555.5 177.5L578.5 177.5L600.5 176.5L623.5 176.5L645.5 175.5L668.5 175.5L690.5 174.5L713.5 174.5M218.5 203.5L241.5 202.5L263.5 202.5L286.5 201.5L308.5 201.5L331.5 200.5L353.5 200.5L376.5 199.5L398.5 199.5L421.5 198.5L443.5 198.5L466.5 198.5L488.5 197.5L511.5 197.5L533.5 196.5L556.5 196.5L578.5 195.5L601.5 195.5L623.5 194.5L645.5 194.5L668.5 193.5L690.5 193.5L713.5 193.5M219.5 221.5L241.5 221.5L264.5 220.5L286.5 220.5L309.5 219.5L331.5 219.5L354.5 219.5L376.5 218.5L399.5 218.5L421.5 217.5L444.5 217.5L466.5 216.5L489.5 216.5L511.5 215.5L533.5 215.5L556.5 214.5L578.5 214.5L601.5 214.5L623.5 213.5L646.5 213.5L668.5 212.5L691.5 212.5L713.5 211.5M219.5 240.5L242.5 240.5L264.5 239.5L287.5 239.5L309.5 238.5L332.5 238.5L354.5 237.5L377.5 237.5L399.5 236.5L421.5 236.5L444.5 235.5L466.5 235.5L489.5 235.5L511.5 234.5L534.5 234.5L556.5 233.5L579.5 233.5L601.5 232.5L624.5 232.5L646.5 231.5L669.5 231.5L691.5 230.5L714.5 230.5M220.5 259.5L242.5 258.5L265.5 258.5L287.5 257.5L309.5 257.5L332.5 256.5L354.5 256.5L377.5 256.5L399.5 255.5L422.5 255.5L444.5 254.5L467.5 254.5L489.5 253.5L512.5 253.5L534.5 252.5L557.5 252.5L579.5 251.5L602.5 251.5L624.5 251.5L647.5 250.5L669.5 250.5L692.5 249.5L714.5 249.5M220.5 278.5L242.5 277.5L265.5 277.5L287.5 276.5L310.5 276.5L332.5 275.5L355.5 275.5L377.5 274.5L400.5 274.5L422.5 273.5L445.5 273.5L467.5 272.5L490.5 272.5L512.5 272.5L535.5 271.5L557.5 271.5L580.5 270.5L602.5 270.5L625.5 269.5L647.5 269.5L670.5 268.5L692.5 268.5L714.5 267.5M220.5 296.5L243.5 296.5L265.5 295.5L288.5 295.5L310.5 294.5L333.5 294.5L355.5 294.5L378.5 293.5L400.5 293.5L423.5 292.5L445.5 292.5L468.5 291.5L490.5 291.5L513.5 290.5L535.5 290.5L558.5 289.5L580.5 289.5L602.5 288.5L625.5 288.5L647.5 288.5L670.5 287.5L692.5 287.5L715.5 286.5M221.5 315.5L243.5 315.5L266.5 314.5L288.5 314.5L311.5 313.5L333.5 313.5L356.5 312.5L378.5 312.5L401.5 311.5L423.5 311.5L446.5 310.5L468.5 310.5L490.5 309.5L513.5 309.5L535.5 309.5L558.5 308.5L580.5 308.5L603.5 307.5L625.5 307.5L648.5 306.5L670.5 306.5L693.5 305.5L715.5 305.5M221.5 334.5L244.5 333.5L266.5 333.5L289.5 332.5L311.5 332.5L334.5 331.5L356.5 331.5L378.5 331.5L401.5 330.5L423.5 330.5L446.5 329.5L468.5 329.5L491.5 328.5L513.5 328.5L536.5 327.5L558.5 327.5L581.5 326.5L603.5 326.5L626.5 325.5L648.5 325.5L671.5 325.5L693.5 324.5L716.5 324.5M222.5 352.5L244.5 352.5L266.5 352.5L289.5 351.5L311.5 351.5L334.5 350.5L356.5 350.5L379.5 349.5L401.5 349.5L424.5 348.5L446.5 348.5L469.5 347.5L491.5 347.5L514.5 347.5L536.5 346.5L559.5 346.5L581.5 345.5L604.5 345.5L626.5 344.5L649.5 344.5L671.5 343.5L694.5 343.5L716.5 342.5M222.5 371.5L244.5 371.5L267.5 370.5L289.5 370.5L312.5 369.5L334.5 369.5L357.5 368.5L379.5 368.5L402.5 368.5L424.5 367.5L447.5 367.5L469.5 366.5L492.5 366.5L514.5 365.5L537.5 365.5L559.5 364.5L582.5 364.5L604.5 363.5L627.5 363.5L649.5 362.5L672.5 362.5L694.5 362.5L716.5 361.5M222.5 390.5L245.5 389.5L267.5 389.5L290.5 389.5L312.5 388.5L335.5 388.5L357.5 387.5L380.5 387.5L402.5 386.5L425.5 386.5L447.5 385.5L470.5 385.5L492.5 384.5L515.5 384.5L537.5 384.5L560.5 383.5L582.5 383.5L604.5 382.5L627.5 382.5L649.5 381.5L672.5 381.5L694.5 380.5L717.5 380.5M223.5 409.5L245.5 408.5L268.5 408.5L290.5 407.5L313.5 407.5L335.5 406.5L358.5 406.5L380.5 405.5L403.5 405.5L425.5 405.5L448.5 404.5L470.5 404.5L492.5 403.5L515.5 403.5L537.5 402.5L560.5 402.5L582.5 401.5L605.5 401.5L627.5 400.5L650.5 400.5L672.5 400.5L695.5 399.5L717.5 399.5M223.5 427.5L246.5 427.5L268.5 426.5L291.5 426.5L313.5 426.5L336.5 425.5L358.5 425.5L380.5 424.5L403.5 424.5L425.5 423.5L448.5 423.5L470.5 422.5L493.5 422.5L515.5 421.5L538.5 421.5L560.5 421.5L583.5 420.5L605.5 420.5L628.5 419.5L650.5 419.5L673.5 418.5L695.5 418.5L718.5 417.5M223.5 446.5L246.5 446.5L268.5 445.5L291.5 445.5L313.5 444.5L336.5 444.5L358.5 443.5L381.5 443.5L403.5 442.5L426.5 442.5L448.5 442.5L471.5 441.5L493.5 441.5L516.5 440.5L538.5 440.5L561.5 439.5L583.5 439.5L606.5 438.5L628.5 438.5L651.5 437.5L673.5 437.5L696.5 437.5L718.5 436.5M224.5 465.5L246.5 464.5L269.5 464.5L291.5 463.5L314.5 463.5L336.5 463.5L359.5 462.5L381.5 462.5L404.5 461.5L426.5 461.5L449.5 460.5L471.5 460.5L494.5 459.5L516.5 459.5L539.5 458.5L561.5 458.5L584.5 458.5L606.5 457.5L629.5 457.5L651.5 456.5L673.5 456.5L696.5 455.5L718.5 455.5M224.5 484.5L247.5 483.5L269.5 483.5L292.5 482.5L314.5 482.5L337.5 481.5L359.5 481.5L382.5 480.5L404.5 480.5L427.5 479.5L449.5 479.5L472.5 479.5L494.5 478.5L517.5 478.5L539.5 477.5L561.5 477.5L584.5 476.5L606.5 476.5L629.5 475.5L651.5 475.5L674.5 474.5L696.5 474.5L719.5 474.5M225.5 502.5L247.5 502.5L270.5 501.5L292.5 501.5L315.5 500.5L337.5 500.5L360.5 500.5L382.5 499.5L405.5 499.5L427.5 498.5L449.5 498.5L472.5 497.5L494.5 497.5L517.5 496.5L539.5 496.5L562.5 495.5L584.5 495.5L607.5 495.5L629.5 494.5L652.5 494.5L674.5 493.5L697.5 493.5L719.5 492.5M225.5 521.5L248.5 521.5L270.5 520.5L293.5 520.5L315.5 519.5L337.5 519.5L360.5 518.5L382.5 518.5L405.5 517.5L427.5 517.5L450.5 516.5L472.5 516.5L495.5 516.5L517.5 515.5L540.5 515.5L562.5 514.5L585.5 514.5L607.5 513.5L630.5 513.5L652.5 512.5L675.5 512.5L697.5 511.5L720.5 511.5M225.5 540.5L248.5 539.5L270.5 539.5L293.5 538.5L315.5 538.5L338.5 537.5L360.5 537.5L383.5 537.5L405.5 536.5L428.5 536.5L450.5 535.5L473.5 535.5L495.5 534.5L518.5 534.5L540.5 533.5L563.5 533.5L585.5 532.5L608.5 532.5L630.5 532.5L653.5 531.5L675.5 531.5L698.5 530.5L720.5 530.5M226.5 559.5L248.5 558.5L271.5 558.5L293.5 557.5L316.5 557.5L338.5 556.5L361.5 556.5L383.5 555.5L406.5 555.5L428.5 554.5L451.5 554.5L473.5 553.5L496.5 553.5L518.5 553.5L541.5 552.5L563.5 552.5L586.5 551.5L608.5 551.5L631.5 550.5L653.5 550.5L675.5 549.5L698.5 549.5L720.5 548.5M226.5 577.5L249.5 577.5L271.5 576.5L294.5 576.5L316.5 575.5L339.5 575.5L361.5 574.5L384.5 574.5L406.5 574.5L429.5 573.5L451.5 573.5L474.5 572.5L496.5 572.5L519.5 571.5L541.5 571.5L563.5 570.5L586.5 570.5L608.5 569.5L631.5 569.5L653.5 569.5L676.5 568.5L698.5 568.5L721.5 567.5M227.5 596.5L249.5 596.5L272.5 595.5L294.5 595.5L317.5 594.5L339.5 594.5L362.5 593.5L384.5 593.5L407.5 592.5L429.5 592.5L451.5 591.5L474.5 591.5L496.5 590.5L519.5 590.5L541.5 590.5L564.5 589.5L586.5 589.5L609.5 588.5L631.5 588.5L654.5 587.5L676.5 587.5L699.5 586.5L721.5 586.5M227.5 615.5L250.5 614.5L272.5 614.5L294.5 613.5L317.5 613.5L339.5 612.5L362.5 612.5L384.5 612.5L407.5 611.5L429.5 611.5L452.5 610.5L474.5 610.5L497.5 609.5L519.5 609.5L542.5 608.5L564.5 608.5L587.5 607.5L609.5 607.5L632.5 606.5L654.5 606.5L677.5 606.5L699.5 605.5L722.5 605.5M227.5 633.5L250.5 633.5L272.5 633.5L295.5 632.5L317.5 632.5L340.5 631.5L362.5 631.5L385.5 630.5L407.5 630.5L430.5 629.5L452.5 629.5L475.5 628.5L497.5 628.5L520.5 627.5L542.5 627.5L565.5 627.5L587.5 626.5L610.5 626.5L632.5 625.5L655.5 625.5L677.5 624.5L700.5 624.5L722.5 623.5M228.5 652.5L250.5 652.5L273.5 651.5L295.5 651.5L318.5 650.5L340.5 650.5L363.5 649.5L385.5 649.5L408.5 649.5L430.5 648.5L453.5 648.5L475.5 647.5L498.5 647.5L520.5 646.5L543.5 646.5L565.5 645.5L588.5 645.5L610.5 644.5L632.5 644.5L655.5 643.5L677.5 643.5L700.5 643.5L722.5 642.5M228.5 671.5L251.5 670.5L273.5 670.5L296.5 670.5L318.5 669.5L341.5 669.5L363.5 668.5L386.5 668.5L408.5 667.5L431.5 667.5L453.5 666.5L476.5 666.5L498.5 665.5L520.5 665.5L543.5 665.5L565.5 664.5L588.5 664.5L610.5 663.5L633.5 663.5L655.5 662.5L678.5 662.5L700.5 661.5L723.5 661.5M229.5 690.5L251.5 689.5L274.5 689.5L296.5 688.5L319.5 688.5L341.5 687.5L364.5 687.5L386.5 686.5L408.5 686.5L431.5 686.5L453.5 685.5L476.5 685.5L498.5 684.5L521.5 684.5L543.5 683.5L566.5 683.5L588.5 682.5L611.5 682.5L633.5 681.5L656.5 681.5L678.5 680.5L701.5 680.5L723.5 680.5M229.5 708.5L252.5 708.5L274.5 707.5L296.5 707.5L319.5 707.5L341.5 706.5L364.5 706.5L386.5 705.5L409.5 705.5L431.5 704.5L454.5 704.5L476.5 703.5L499.5 703.5L521.5 702.5L544.5 702.5L566.5 702.5L589.5 701.5L611.5 701.5L634.5 700.5L656.5 700.5L679.5 699.5L701.5 699.5L724.5 698.5M229.5 727.5L252.5 727.5L274.5 726.5L297.5 726.5L319.5 725.5L342.5 725.5L364.5 724.5L387.5 724.5L409.5 723.5L432.5 723.5L454.5 723.5L477.5 722.5L499.5 722.5L522.5 721.5L544.5 721.5L567.5 720.5L589.5 720.5L612.5 719.5L634.5 719.5L657.5 718.5L679.5 718.5L702.5 718.5L724.5 717.5M230.5 746.5L252.5 745.5L275.5 745.5L297.5 744.5L320.5 744.5L342.5 744.5L365.5 743.5L387.5 743.5L410.5 742.5L432.5 742.5L455.5 741.5L477.5 741.5L500.5 740.5L522.5 740.5L545.5 739.5L567.5 739.5L590.5 739.5L612.5 738.5L634.5 738.5L657.5 737.5L679.5 737.5L702.5 736.5L724.5 736.5M230.5 765.5L253.5 764.5L275.5 764.5L298.5 763.5L320.5 763.5L343.5 762.5L365.5 762.5L388.5 761.5L410.5 761.5L433.5 760.5L455.5 760.5L478.5 760.5L500.5 759.5L522.5 759.5L545.5 758.5L567.5 758.5L590.5 757.5L612.5 757.5L635.5 756.5L657.5 756.5L680.5 755.5L702.5 755.5L725.5 755.5M231.5 783.5L253.5 783.5L276.5 782.5L298.5 782.5L321.5 781.5L343.5 781.5L365.5 781.5L388.5 780.5L410.5 780.5L433.5 779.5L455.5 779.5L478.5 778.5L500.5 778.5L523.5 777.5L545.5 777.5L568.5 776.5L590.5 776.5L613.5 776.5L635.5 775.5L658.5 775.5L680.5 774.5L703.5 774.5L725.5 773.5M231.5 802.5L253.5 802.5L276.5 801.5L298.5 801.5L321.5 800.5L343.5 800.5L366.5 799.5L388.5 799.5L411.5 798.5L433.5 798.5L456.5 797.5L478.5 797.5L501.5 797.5L523.5 796.5L546.5 796.5L568.5 795.5L591.5 795.5L613.5 794.5L636.5 794.5L658.5 793.5L681.5 793.5L703.5 792.5L726.5 792.5M231.5 821.5L254.5 820.5L276.5 820.5L299.5 819.5L321.5 819.5L344.5 818.5L366.5 818.5L389.5 818.5L411.5 817.5L434.5 817.5L456.5 816.5L479.5 816.5L501.5 815.5L524.5 815.5L546.5 814.5L569.5 814.5L591.5 813.5L614.5 813.5L636.5 813.5L659.5 812.5L681.5 812.5L703.5 811.5L726.5 811.5M232.5 840.5L254.5 839.5L277.5 839.5L299.5 838.5L322.5 838.5L344.5 837.5L367.5 837.5L389.5 836.5L412.5 836.5L434.5 835.5L457.5 835.5L479.5 834.5L502.5 834.5L524.5 834.5L547.5 833.5L569.5 833.5L591.5 832.5L614.5 832.5L636.5 831.5L659.5 831.5L681.5 830.5L704.5 830.5L726.5 829.5M232.5 858.5L255.5 858.5L277.5 857.5L300.5 857.5L322.5 856.5L345.5 856.5L367.5 855.5L390.5 855.5L412.5 855.5L435.5 854.5L457.5 854.5L479.5 853.5L502.5 853.5L524.5 852.5L547.5 852.5L569.5 851.5L592.5 851.5L614.5 850.5L637.5 850.5L659.5 850.5L682.5 849.5L704.5 849.5L727.5 848.5M214.5 15.5L215.5 34.5L215.5 53.5L216.5 71.5L216.5 90.5L216.5 109.5L217.5 128.5L217.5 146.5L218.5 165.5L218.5 184.5L218.5 203.5L219.5 221.5L219.5 240.5L220.5 259.5L220.5 278.5L220.5 296.5L221.5 315.5L221.5 334.5L222.5 352.5L222.5 371.5L222.5 390.5L223.5 409.5L223.5 427.5L223.5 446.5L224.5 465.5L224.5 484.5L225.5 502.5L225.5 521.5L225.5 540.5L226.5 559.5L226.5 577.5L227.5 596.5L227.5 615.5L227.5 633.5L228.5 652.5L228.5 671.5L229.5 690.5L229.5 708.5L229.5 727.5L230.5 746.5L230.5 765.5L231.5 783.5L231.5 802.5L231.5 821.5L232.5 840.5L232.5 858.5M237.5 15.5L237.5 34.5L238.5 52.5L238.5 71.5L238.5 90.5L239.5 108.5L239.5 127.5L240.5 146.5L240.5 165.5L240.5 183.5L241.5 202.5L241.5 221.5L242.5 240.5L242.5 258.5L242.5 277.5L243.5 296.5L243.5 315.5L244.5 333.5L244.5 352.5L244.5 371.5L245.5 389.5L245.5 408.5L246.5 427.5L246.5 446.5L246.5 464.5L247.5 483.5L247.5 502.5L248.5 521.5L248.5 539.5L248.5 558.5L249.5 577.5L249.5 596.5L250.5 614.5L250.5 633.5L250.5 652.5L251.5 670.5L251.5 689.5L252.5 708.5L252.5 727.5L252.5 745.5L253.5 764.5L253.5 783.5L253.5 802.5L254.5 820.5L254.5 839.5L255.5 858.5M259.5 14.5L260.5 33.5L260.5 52.5L261.5 71.5L261.5 89.5L261.5 108.5L262.5 127.5L262.5 145.5L263.5 164.5L263.5 183.5L263.5 202.5L264.5 220.5L264.5 239.5L265.5 258.5L265.5 277.5L265.5 295.5L266.5 314.5L266.5 333.5L266.5 352.5L267.5 370.5L267.5 389.5L268.5 408.5L268.5 426.5L268.5 445.5L269.5 464.5L269.5 483.5L270.5 501.5L270.5 520.5L270.5 539.5L271.5 558.5L271.5 576.5L272.5 595.5L272.5 614.5L272.5 633.5L273.5 651.5L273.5 670.5L274.5 689.5L274.5 707.5L274.5 726.5L275.5 745.5L275.5 764.5L276.5 782.5L276.5 801.5L276.5 820.5L277.5 839.5L277.5 857.5M282.5 14.5L282.5 33.5L283.5 51.5L283.5 70.5L283.5 89.5L284.5 108.5L284.5 126.5L285.5 145.5L285.5 164.5L285.5 182.5L286.5 201.5L286.5 220.5L287.5 239.5L287.5 257.5L287.5 276.5L288.5 295.5L288.5 314.5L289.5 332.5L289.5 351.5L289.5 370.5L290.5 389.5L290.5 407.5L291.5 426.5L291.5 445.5L291.5 463.5L292.5 482.5L292.5 501.5L293.5 520.5L293.5 538.5L293.5 557.5L294.5 576.5L294.5 595.5L294.5 613.5L295.5 632.5L295.5 651.5L296.5 670.5L296.5 688.5L296.5 707.5L297.5 726.5L297.5 744.5L298.5 763.5L298.5 782.5L298.5 801.5L299.5 819.5L299.5 838.5L300.5 857.5M304.5 13.5L305.5 32.5L305.5 51.5L306.5 70.5L306.5 88.5L306.5 107.5L307.5 126.5L307.5 145.5L307.5 163.5L308.5 182.5L308.5 201.5L309.5 219.5L309.5 238.5L309.5 257.5L310.5 276.5L310.5 294.5L311.5 313.5L311.5 332.5L311.5 351.5L312.5 369.5L312.5 388.5L313.5 407.5L313.5 426.5L313.5 444.5L314.5 463.5L314.5 482.5L315.5 500.5L315.5 519.5L315.5 538.5L316.5 557.5L316.5 575.5L317.5 594.5L317.5 613.5L317.5 632.5L318.5 650.5L318.5 669.5L319.5 688.5L319.5 707.5L319.5 725.5L320.5 744.5L320.5 763.5L321.5 781.5L321.5 800.5L321.5 819.5L322.5 838.5L322.5 856.5M327.5 13.5L327.5 32.5L328.5 50.5L328.5 69.5L328.5 88.5L329.5 107.5L329.5 125.5L330.5 144.5L330.5 163.5L330.5 182.5L331.5 200.5L331.5 219.5L332.5 238.5L332.5 256.5L332.5 275.5L333.5 294.5L333.5 313.5L334.5 331.5L334.5 350.5L334.5 369.5L335.5 388.5L335.5 406.5L336.5 425.5L336.5 444.5L336.5 463.5L337.5 481.5L337.5 500.5L337.5 519.5L338.5 537.5L338.5 556.5L339.5 575.5L339.5 594.5L339.5 612.5L340.5 631.5L340.5 650.5L341.5 669.5L341.5 687.5L341.5 706.5L342.5 725.5L342.5 744.5L343.5 762.5L343.5 781.5L343.5 800.5L344.5 818.5L344.5 837.5L345.5 856.5M349.5 13.5L350.5 31.5L350.5 50.5L350.5 69.5L351.5 87.5L351.5 106.5L352.5 125.5L352.5 144.5L352.5 162.5L353.5 181.5L353.5 200.5L354.5 219.5L354.5 237.5L354.5 256.5L355.5 275.5L355.5 294.5L356.5 312.5L356.5 331.5L356.5 350.5L357.5 368.5L357.5 387.5L358.5 406.5L358.5 425.5L358.5 443.5L359.5 462.5L359.5 481.5L360.5 500.5L360.5 518.5L360.5 537.5L361.5 556.5L361.5 574.5L362.5 593.5L362.5 612.5L362.5 631.5L363.5 649.5L363.5 668.5L364.5 687.5L364.5 706.5L364.5 724.5L365.5 743.5L365.5 762.5L365.5 781.5L366.5 799.5L366.5 818.5L367.5 837.5L367.5 855.5M372.5 12.5L372.5 31.5L373.5 50.5L373.5 68.5L373.5 87.5L374.5 106.5L374.5 124.5L375.5 143.5L375.5 162.5L375.5 181.5L376.5 199.5L376.5 218.5L377.5 237.5L377.5 256.5L377.5 274.5L378.5 293.5L378.5 312.5L378.5 331.5L379.5 349.5L379.5 368.5L380.5 387.5L380.5 405.5L380.5 424.5L381.5 443.5L381.5 462.5L382.5 480.5L382.5 499.5L382.5 518.5L383.5 537.5L383.5 555.5L384.5 574.5L384.5 593.5L384.5 612.5L385.5 630.5L385.5 649.5L386.5 668.5L386.5 686.5L386.5 705.5L387.5 724.5L387.5 743.5L388.5 761.5L388.5 780.5L388.5 799.5L389.5 818.5L389.5 836.5L390.5 855.5M394.5 12.5L395.5 30.5L395.5 49.5L395.5 68.5L396.5 87.5L396.5 105.5L397.5 124.5L397.5 143.5L397.5 161.5L398.5 180.5L398.5 199.5L399.5 218.5L399.5 236.5L399.5 255.5L400.5 274.5L400.5 293.5L401.5 311.5L401.5 330.5L401.5 349.5L402.5 368.5L402.5 386.5L403.5 405.5L403.5 424.5L403.5 442.5L404.5 461.5L404.5 480.5L405.5 499.5L405.5 517.5L405.5 536.5L406.5 555.5L406.5 574.5L407.5 592.5L407.5 611.5L407.5 630.5L408.5 649.5L408.5 667.5L408.5 686.5L409.5 705.5L409.5 723.5L410.5 742.5L410.5 761.5L410.5 780.5L411.5 798.5L411.5 817.5L412.5 836.5L412.5 855.5M417.5 11.5L417.5 30.5L418.5 49.5L418.5 67.5L418.5 86.5L419.5 105.5L419.5 124.5L419.5 142.5L420.5 161.5L420.5 180.5L421.5 198.5L421.5 217.5L421.5 236.5L422.5 255.5L422.5 273.5L423.5 292.5L423.5 311.5L423.5 330.5L424.5 348.5L424.5 367.5L425.5 386.5L425.5 405.5L425.5 423.5L426.5 442.5L426.5 461.5L427.5 479.5L427.5 498.5L427.5 517.5L428.5 536.5L428.5 554.5L429.5 573.5L429.5 592.5L429.5 611.5L430.5 629.5L430.5 648.5L431.5 667.5L431.5 686.5L431.5 704.5L432.5 723.5L432.5 742.5L433.5 760.5L433.5 779.5L433.5 798.5L434.5 817.5L434.5 835.5L435.5 854.5M439.5 11.5L440.5 29.5L440.5 48.5L440.5 67.5L441.5 86.5L441.5 104.5L442.5 123.5L442.5 142.5L442.5 161.5L443.5 179.5L443.5 198.5L444.5 217.5L444.5 235.5L444.5 254.5L445.5 273.5L445.5 292.5L446.5 310.5L446.5 329.5L446.5 348.5L447.5 367.5L447.5 385.5L448.5 404.5L448.5 423.5L448.5 442.5L449.5 460.5L449.5 479.5L449.5 498.5L450.5 516.5L450.5 535.5L451.5 554.5L451.5 573.5L451.5 591.5L452.5 610.5L452.5 629.5L453.5 648.5L453.5 666.5L453.5 685.5L454.5 704.5L454.5 723.5L455.5 741.5L455.5 760.5L455.5 779.5L456.5 797.5L456.5 816.5L457.5 835.5L457.5 854.5M462.5 10.5L462.5 29.5L462.5 48.5L463.5 66.5L463.5 85.5L464.5 104.5L464.5 123.5L464.5 141.5L465.5 160.5L465.5 179.5L466.5 198.5L466.5 216.5L466.5 235.5L467.5 254.5L467.5 272.5L468.5 291.5L468.5 310.5L468.5 329.5L469.5 347.5L469.5 366.5L470.5 385.5L470.5 404.5L470.5 422.5L471.5 441.5L471.5 460.5L472.5 479.5L472.5 497.5L472.5 516.5L473.5 535.5L473.5 553.5L474.5 572.5L474.5 591.5L474.5 610.5L475.5 628.5L475.5 647.5L476.5 666.5L476.5 685.5L476.5 703.5L477.5 722.5L477.5 741.5L478.5 760.5L478.5 778.5L478.5 797.5L479.5 816.5L479.5 834.5L479.5 853.5M484.5 10.5L485.5 28.5L485.5 47.5L485.5 66.5L486.5 85.5L486.5 103.5L487.5 122.5L487.5 141.5L487.5 160.5L488.5 178.5L488.5 197.5L489.5 216.5L489.5 235.5L489.5 253.5L490.5 272.5L490.5 291.5L490.5 309.5L491.5 328.5L491.5 347.5L492.5 366.5L492.5 384.5L492.5 403.5L493.5 422.5L493.5 441.5L494.5 459.5L494.5 478.5L494.5 497.5L495.5 516.5L495.5 534.5L496.5 553.5L496.5 572.5L496.5 590.5L497.5 609.5L497.5 628.5L498.5 647.5L498.5 665.5L498.5 684.5L499.5 703.5L499.5 722.5L500.5 740.5L500.5 759.5L500.5 778.5L501.5 797.5L501.5 815.5L502.5 834.5L502.5 853.5M507.5 9.5L507.5 28.5L507.5 47.5L508.5 66.5L508.5 84.5L509.5 103.5L509.5 122.5L509.5 140.5L510.5 159.5L510.5 178.5L511.5 197.5L511.5 215.5L511.5 234.5L512.5 253.5L512.5 272.5L513.5 290.5L513.5 309.5L513.5 328.5L514.5 347.5L514.5 365.5L515.5 384.5L515.5 403.5L515.5 421.5L516.5 440.5L516.5 459.5L517.5 478.5L517.5 496.5L517.5 515.5L518.5 534.5L518.5 553.5L519.5 571.5L519.5 590.5L519.5 609.5L520.5 627.5L520.5 646.5L520.5 665.5L521.5 684.5L521.5 702.5L522.5 721.5L522.5 740.5L522.5 759.5L523.5 777.5L523.5 796.5L524.5 815.5L524.5 834.5L524.5 852.5M529.5 9.5L530.5 28.5L530.5 46.5L530.5 65.5L531.5 84.5L531.5 103.5L531.5 121.5L532.5 140.5L532.5 159.5L533.5 177.5L533.5 196.5L533.5 215.5L534.5 234.5L534.5 252.5L535.5 271.5L535.5 290.5L535.5 309.5L536.5 327.5L536.5 346.5L537.5 365.5L537.5 384.5L537.5 402.5L538.5 421.5L538.5 440.5L539.5 458.5L539.5 477.5L539.5 496.5L540.5 515.5L540.5 533.5L541.5 552.5L541.5 571.5L541.5 590.5L542.5 608.5L542.5 627.5L543.5 646.5L543.5 665.5L543.5 683.5L544.5 702.5L544.5 721.5L545.5 739.5L545.5 758.5L545.5 777.5L546.5 796.5L546.5 814.5L547.5 833.5L547.5 852.5M552.5 8.5L552.5 27.5L552.5 46.5L553.5 65.5L553.5 83.5L554.5 102.5L554.5 121.5L554.5 140.5L555.5 158.5L555.5 177.5L556.5 196.5L556.5 214.5L556.5 233.5L557.5 252.5L557.5 271.5L558.5 289.5L558.5 308.5L558.5 327.5L559.5 346.5L559.5 364.5L560.5 383.5L560.5 402.5L560.5 421.5L561.5 439.5L561.5 458.5L561.5 477.5L562.5 495.5L562.5 514.5L563.5 533.5L563.5 552.5L563.5 570.5L564.5 589.5L564.5 608.5L565.5 627.5L565.5 645.5L565.5 664.5L566.5 683.5L566.5 702.5L567.5 720.5L567.5 739.5L567.5 758.5L568.5 776.5L568.5 795.5L569.5 814.5L569.5 833.5L569.5 851.5M574.5 8.5L574.5 27.5L575.5 45.5L575.5 64.5L576.5 83.5L576.5 102.5L576.5 120.5L577.5 139.5L577.5 158.5L578.5 177.5L578.5 195.5L578.5 214.5L579.5 233.5L579.5 251.5L580.5 270.5L580.5 289.5L580.5 308.5L581.5 326.5L581.5 345.5L582.5 364.5L582.5 383.5L582.5 401.5L583.5 420.5L583.5 439.5L584.5 458.5L584.5 476.5L584.5 495.5L585.5 514.5L585.5 532.5L586.5 551.5L586.5 570.5L586.5 589.5L587.5 607.5L587.5 626.5L588.5 645.5L588.5 664.5L588.5 682.5L589.5 701.5L589.5 720.5L590.5 739.5L590.5 757.5L590.5 776.5L591.5 795.5L591.5 813.5L591.5 832.5L592.5 851.5M597.5 7.5L597.5 26.5L597.5 45.5L598.5 64.5L598.5 82.5L599.5 101.5L599.5 120.5L599.5 139.5L600.5 157.5L600.5 176.5L601.5 195.5L601.5 214.5L601.5 232.5L602.5 251.5L602.5 270.5L602.5 288.5L603.5 307.5L603.5 326.5L604.5 345.5L604.5 363.5L604.5 382.5L605.5 401.5L605.5 420.5L606.5 438.5L606.5 457.5L606.5 476.5L607.5 495.5L607.5 513.5L608.5 532.5L608.5 551.5L608.5 569.5L609.5 588.5L609.5 607.5L610.5 626.5L610.5 644.5L610.5 663.5L611.5 682.5L611.5 701.5L612.5 719.5L612.5 738.5L612.5 757.5L613.5 776.5L613.5 794.5L614.5 813.5L614.5 832.5L614.5 850.5M619.5 7.5L619.5 26.5L620.5 44.5L620.5 63.5L621.5 82.5L621.5 101.5L621.5 119.5L622.5 138.5L622.5 157.5L623.5 176.5L623.5 194.5L623.5 213.5L624.5 232.5L624.5 251.5L625.5 269.5L625.5 288.5L625.5 307.5L626.5 325.5L626.5 344.5L627.5 363.5L627.5 382.5L627.5 400.5L628.5 419.5L628.5 438.5L629.5 457.5L629.5 475.5L629.5 494.5L630.5 513.5L630.5 532.5L631.5 550.5L631.5 569.5L631.5 588.5L632.5 606.5L632.5 625.5L632.5 644.5L633.5 663.5L633.5 681.5L634.5 700.5L634.5 719.5L634.5 738.5L635.5 756.5L635.5 775.5L636.5 794.5L636.5 813.5L636.5 831.5L637.5 850.5M642.5 7.5L642.5 25.5L642.5 44.5L643.5 63.5L643.5 81.5L643.5 100.5L644.5 119.5L644.5 138.5L645.5 156.5L645.5 175.5L645.5 194.5L646.5 213.5L646.5 231.5L647.5 250.5L647.5 269.5L647.5 288.5L648.5 306.5L648.5 325.5L649.5 344.5L649.5 362.5L649.5 381.5L650.5 400.5L650.5 419.5L651.5 437.5L651.5 456.5L651.5 475.5L652.5 494.5L652.5 512.5L653.5 531.5L653.5 550.5L653.5 569.5L654.5 587.5L654.5 606.5L655.5 625.5L655.5 643.5L655.5 662.5L656.5 681.5L656.5 700.5L657.5 718.5L657.5 737.5L657.5 756.5L658.5 775.5L658.5 793.5L659.5 812.5L659.5 831.5L659.5 850.5M664.5 6.5L664.5 25.5L665.5 44.5L665.5 62.5L666.5 81.5L666.5 100.5L666.5 119.5L667.5 137.5L667.5 156.5L668.5 175.5L668.5 193.5L668.5 212.5L669.5 231.5L669.5 250.5L670.5 268.5L670.5 287.5L670.5 306.5L671.5 325.5L671.5 343.5L672.5 362.5L672.5 381.5L672.5 400.5L673.5 418.5L673.5 437.5L673.5 456.5L674.5 474.5L674.5 493.5L675.5 512.5L675.5 531.5L675.5 549.5L676.5 568.5L676.5 587.5L677.5 606.5L677.5 624.5L677.5 643.5L678.5 662.5L678.5 680.5L679.5 699.5L679.5 718.5L679.5 737.5L680.5 755.5L680.5 774.5L681.5 793.5L681.5 812.5L681.5 830.5L682.5 849.5M686.5 6.5L687.5 24.5L687.5 43.5L688.5 62.5L688.5 81.5L688.5 99.5L689.5 118.5L689.5 137.5L690.5 156.5L690.5 174.5L690.5 193.5L691.5 212.5L691.5 230.5L692.5 249.5L692.5 268.5L692.5 287.5L693.5 305.5L693.5 324.5L694.5 343.5L694.5 362.5L694.5 380.5L695.5 399.5L695.5 418.5L696.5 437.5L696.5 455.5L696.5 474.5L697.5 493.5L697.5 511.5L698.5 530.5L698.5 549.5L698.5 568.5L699.5 586.5L699.5 605.5L700.5 624.5L700.5 643.5L700.5 661.5L701.5 680.5L701.5 699.5L702.5 718.5L702.5 736.5L702.5 755.5L703.5 774.5L703.5 792.5L703.5 811.5L704.5 830.5L704.5 849.5M709.5 5.5L709.5 24.5L710.5 43.5L710.5 61.5L711.5 80.5L711.5 99.5L711.5 118.5L712.5 136.5L712.5 155.5L713.5 174.5L713.5 193.5L713.5 211.5L714.5 230.5L714.5 249.5L714.5 267.5L715.5 286.5L715.5 305.5L716.5 324.5L716.5 342.5L716.5 361.5L717.5 380.5L717.5 399.5L718.5 417.5L718.5 436.5L718.5 455.5L719.5 474.5L719.5 492.5L720.5 511.5L720.5 530.5L720.5 548.5L721.5 567.5L721.5 586.5L722.5 605.5L722.5 623.5L722.5 642.5L723.5 661.5L723.5 680.5L724.5 698.5L724.5 717.5L724.5 736.5L725.5 755.5L725.5 773.5L726.5 792.5L726.5 811.5L726.5 829.5L727.5 848.5"/><use href="#gp"/>
<polygon fill="none" stroke="#0c0cff" stroke-width="2" stroke-linejoin="round" points="235.2,53.5 629.6,21.5 617.5,101 620.6,123 627.9,179 632,212 638.3,258 642.5,287 642.5,340 641,432 641,480 639.4,519.6 651.9,588 661.3,646.7 679,702.5 696.4,760 707.9,787.6 714.8,803.7 722.4,814 721.7,825.5 705.6,830 682.6,838 659.6,844 634.3,849 615.9,850.8 605.6,849.7 595.2,842.8 588.3,833.6 545.8,776 516.2,734 477.5,680 458.8,654 421.8,600 386.6,554 347.5,500 268.5,387.7 258.8,370.6 250.8,340 243.5,314 221.7,230.8 218.5,226.7 223.3,208 224,170 226,130 232,83"/>
<rect x="536.55" y="309.6" width="208.95" height="91.6" fill="none" stroke="#43a12d" stroke-width="3.7"/>
</svg>
</div></div>
<div id="rp">
<!-- outer panel bevel -->
<div style="left:941px;top:3px;width:361px;height:858px;box-sizing:border-box;border:1px solid #ababab;border-top-color:#d6d6d6;border-left-color:#d6d6d6;"></div>
<div style="left:942px;top:4px;width:359px;height:856px;background:#fff;"></div>
<div style="left:941px;top:3px;width:2px;height:858px;background:#e2e2e2;"></div>
<div style="left:942px;top:856px;width:358px;height:3px;background:#e4e4e4;"></div>
<div style="left:944px;top:5px;width:355px;height:25px;background:#fff;"></div>
<!-- title -->
<div class="t" style="left:946px;top:10px;font-weight:bold;font-size:11.5px;letter-spacing:0.2px;" id="ttl">Applikationskarten</div>
<svg style="left:1277px;top:8px;" width="18" height="18" viewBox="0 0 18 18"><path d="M2.3 2.3L15.2 15.2M15.2 2.3L2.3 15.2" stroke="#b01c34" stroke-width="2.9" fill="none"/></svg>
<div style="left:943px;top:30px;width:357px;height:2px;background:#6a6a6a;"></div>
<!-- tab control -->
<div style="left:944px;top:32px;width:356px;height:824px;background:#f0f0f0;"></div>
<div style="left:943px;top:32px;width:1px;height:824px;background:#828282;"></div>
<div style="left:944px;top:52px;width:353px;height:802px;background:#fff;border-top:1px solid #dadada;border-right:1px solid #dadada;box-sizing:border-box;"></div>
<div style="left:944px;top:32px;width:102px;height:21px;background:#fff;border-right:1px solid #dadada;box-sizing:border-box;"></div>
<div style="left:1046px;top:34px;width:88px;height:18px;border:1px solid #dadada;border-left:none;border-bottom:none;box-sizing:border-box;"></div>
<div style="left:1134px;top:34px;width:101px;height:18px;border:1px solid #dadada;border-left:none;border-bottom:none;box-sizing:border-box;"></div>
<div class="t" style="left:952px;top:35px;" id="tab1">nährstoffbezogen</div>
<div class="t" style="left:1050px;top:37px;letter-spacing:-0.1px;" id="tab2">produktbezogen</div>
<div class="t" style="left:1140px;top:37px;letter-spacing:-0.3px;" id="tab3">maschinenbezogen</div>
<!-- Grundstoff row -->
<div class="t" style="left:956px;top:68px;" id="lblg">Grundstoff</div>
<div style="left:1021px;top:64px;width:191px;height:21px;border:1px solid #7a7a7a;box-sizing:border-box;background:#fff;"></div>
<div class="t" style="left:1024px;top:67px;" id="cbt">Stickstoff</div>
<svg style="left:1197px;top:70px;" width="12" height="8" viewBox="0 0 12 8"><path d="M2 1.5L6 5.6L10 1.5" stroke="#444" stroke-width="1.1" fill="none"/></svg>
<div style="left:1214px;top:63px;width:75px;height:22px;border:1px solid #3c9e28;box-sizing:border-box;background:#fff;"></div>
<div class="t" style="left:1214px;top:68px;width:75px;text-align:center;">N</div>
<div class="hl" style="left:948px;top:91px;width:346px;background:#a8a8a8;"></div>
<!-- Karten group -->
<div style="left:948px;top:97px;width:347px;height:757px;border:1px solid #6e6e6e;box-sizing:border-box;"></div>
<svg style="left:957px;top:102px;" width="9" height="10" viewBox="0 0 9 10"><path d="M1 1L4.5 4.2L8 1M1 5L4.5 8.2L8 5" stroke="#000" stroke-width="1.3" fill="none"/></svg>
<div class="t hd" style="left:975px;top:99px;">Karten</div>
<div class="hl" style="left:949px;top:114px;width:344px;background:#8a8a8a;"></div>
<!-- karten icons -->
<svg style="left:955px;top:119px;" width="20" height="24" viewBox="0 0 20 24"><path d="M1.8 2.3H12.4L18.2 8.1V21.7H1.8Z" fill="#fff" stroke="#111" stroke-width="1.7" stroke-linejoin="round"/><path d="M12 2.3V8.5H18.2Z" fill="#111"/></svg>
<svg style="left:986px;top:119px;" width="22" height="24" viewBox="0 0 22 24"><path d="M1.8 2.3H12.4L18.2 8.1V21.7H1.8Z" fill="#fff" stroke="#111" stroke-width="1.7" stroke-linejoin="round"/><path d="M12 2.3V8.5H18.2Z" fill="#111"/><path d="M4.6 9.7H11.5M4.6 12.6H15M4.6 15.6H13M4.6 18.5H7.2" stroke="#111" stroke-width="1.4"/><path d="M11.2 18.8L17.6 11.8L19 13.4L13 20.2Z" fill="#6e6e6e"/><path d="M10.6 18.5L14 21.4L10.4 22.4Z" fill="#3ca028"/><path d="M17.4 9.4L19.8 11.4" stroke="#3ca028" stroke-width="1.3"/></svg>
<svg style="left:1017px;top:119px;" width="22" height="24" viewBox="0 0 22 24"><path d="M1.8 2.3H12.4L18.2 8.1V21.7H1.8Z" fill="#fff" stroke="#111" stroke-width="1.7" stroke-linejoin="round"/><path d="M12 2.3V8.5H18.2Z" fill="#111"/><path d="M8.8 11.6L18.6 21.8M18.6 11.6L8.8 21.8" stroke="#b81c36" stroke-width="2.8" fill="none"/></svg>
<!-- list box -->
<div style="left:950px;top:145px;width:343px;height:383px;border:1px solid #828282;box-sizing:border-box;background:#fff;"></div>
<div style="left:952px;top:147px;width:322px;height:20px;background:#99d1ff;"></div>
<div class="t" style="left:954px;top:149px;" id="li1">Düngekarte Stickstoff</div>
<div style="left:1275px;top:147px;width:16px;height:363px;background:#f0f0f0;"></div>
<svg style="left:1278.5px;top:152.3px;" width="8" height="7" viewBox="0 0 8 7"><path d="M0.9 5.7L4 2.1L7.1 5.7" stroke="#505050" stroke-width="2.1" fill="none"/></svg>
<div style="left:1275px;top:320px;width:15px;height:17px;background:#cdcdcd;"></div>
<svg style="left:1278.5px;top:497.3px;" width="8" height="7" viewBox="0 0 8 7"><path d="M0.9 1.3L4 4.9L7.1 1.3" stroke="#505050" stroke-width="2.1" fill="none"/></svg>
<div style="left:951px;top:510px;width:340px;height:16px;background:#f0f0f0;"></div>
<svg style="left:956.3px;top:513.5px;" width="7" height="8" viewBox="0 0 7 8"><path d="M5.7 0.9L2.1 4L5.7 7.1" stroke="#505050" stroke-width="2.1" fill="none"/></svg>
<div style="left:969px;top:510px;width:17px;height:15px;background:#cdcdcd;"></div>
<svg style="left:1262.3px;top:513.5px;" width="7" height="8" viewBox="0 0 7 8"><path d="M1.3 0.9L4.9 4L1.3 7.1" stroke="#505050" stroke-width="2.1" fill="none"/></svg>
<!-- Ansicht -->
<svg style="left:957px;top:533px;" width="9" height="10" viewBox="0 0 9 10"><path d="M1 1L4.5 4.2L8 1M1 5L4.5 8.2L8 5" stroke="#000" stroke-width="1.3" fill="none"/></svg>
<div class="t hd" style="left:975px;top:530px;">Ansicht</div>
<div class="hl" style="left:949px;top:545px;width:344px;background:#8a8a8a;"></div>
<div style="left:953px;top:548px;width:23px;height:21px;background:#cce8ff;border:1px solid #99d1ff;box-sizing:border-box;"></div>
<svg style="left:956px;top:551px;" width="16" height="16" viewBox="0 0 16 16"><rect x="0.6" y="0.6" width="14.8" height="14.8" fill="#fff" stroke="#111" stroke-width="1.2"/><path d="M5.5 0V16M10.5 0V16M0 5.5H16M0 10.5H16" stroke="#111" stroke-width="1.1"/></svg>
<svg style="left:979px;top:551px;" width="16" height="16" viewBox="0 0 16 16"><rect width="16" height="16" fill="#1a1a1a"/><rect x="1" y="1" width="4" height="4" fill="#3c9e28"/><rect x="6" y="1" width="4" height="4" fill="#3c9e28"/><rect x="11" y="1" width="4" height="4" fill="#777"/><rect x="1" y="6" width="4" height="4" fill="#3c9e28"/><rect x="6" y="6" width="4" height="4" fill="#b01c34"/><rect x="11" y="6" width="4" height="4" fill="#777"/><rect x="1" y="11" width="4" height="4" fill="#b01c34"/><rect x="6" y="11" width="4" height="4" fill="#b01c34"/><rect x="11" y="11" width="4" height="4" fill="#b01c34"/></svg>
<svg style="left:1002px;top:551px;" width="16" height="16" viewBox="0 0 16 16"><rect x="0.6" y="0.6" width="14.8" height="14.8" fill="#fff" stroke="#111" stroke-width="1.2"/><circle cx="5" cy="4.6" r="2.2" fill="none" stroke="#b81c36" stroke-width="1.7"/><circle cx="5" cy="10.9" r="2.2" fill="none" stroke="#b81c36" stroke-width="1.7"/><circle cx="11.1" cy="7.6" r="2.2" fill="none" stroke="#b81c36" stroke-width="1.7"/></svg>
<!-- Palette -->
<div class="t" style="left:955px;top:579px;">Palette</div>
<div style="left:996px;top:575px;width:221px;height:22px;border:1px solid #7a7a7a;box-sizing:border-box;background:#fff;"></div>
<svg style="left:1201px;top:583px;" width="12" height="8" viewBox="0 0 12 8"><path d="M1.5 1.5L6 6L10.5 1.5" stroke="#444" stroke-width="1.1" fill="none"/></svg>
<svg style="left:1223px;top:578px;" width="16" height="16" viewBox="0 0 16 16"><rect width="16" height="16" fill="#1a1a1a"/><rect x="1" y="1" width="4" height="4" fill="#777"/><rect x="6" y="1" width="4" height="4" fill="#3c9e28"/><rect x="11" y="1" width="4" height="4" fill="#ffe033"/><rect x="1" y="6" width="4" height="4" fill="#3c9e28"/><rect x="6" y="6" width="4" height="4" fill="#b01c34"/><rect x="11" y="6" width="4" height="4" fill="#777"/><rect x="1" y="11" width="4" height="4" fill="#b01c34"/><rect x="6" y="11" width="4" height="4" fill="#ffe033"/><rect x="11" y="11" width="4" height="4" fill="#b01c34"/></svg>
<svg style="left:1246px;top:577px;" width="18" height="18" viewBox="0 0 18 18"><path d="M2 2L16 16M16 2L2 16" stroke="#b81c36" stroke-width="3" fill="none"/></svg>
<svg style="left:1271px;top:578px;" width="16" height="16" viewBox="0 0 16 16"><path d="M0 0H16V16H0Z" fill="#151515"/><rect x="3.2" y="0" width="10" height="6.4" fill="#fff"/><rect x="4.4" y="0" width="7.6" height="5.4" fill="#151515"/><rect x="5" y="0.9" width="1.9" height="4" fill="#fff"/><rect x="3" y="9" width="10" height="4.3" fill="#fff"/></svg>
<!-- Bearbeiten -->
<svg style="left:957px;top:605px;" width="9" height="10" viewBox="0 0 9 10"><path d="M1 1L4.5 4.2L8 1M1 5L4.5 8.2L8 5" stroke="#000" stroke-width="1.3" fill="none"/></svg>
<div class="t hd" style="left:975px;top:602px;">Bearbeiten</div>
<div class="hl" style="left:949px;top:617px;width:344px;background:#8a8a8a;"></div>
<svg style="left:950px;top:618px;" width="72" height="26" viewBox="950 618 72 26"><path d="M959.4 632.6L966 625.7L969.6 628.5L962.4 635.9Z" fill="#1c1c1c"/><path d="M958.3 634L961 636.8L956.3 638.1Z" fill="#43a12d"/><path d="M967.7 623.8L969 623L971.8 626.3L970.4 627.4Z" fill="#43a12d"/><path d="M979.8 630.8L983.4 624.2H990.8L994.4 630.8L990.8 637.6H983.4Z" fill="#43a12d"/><path d="M1002.4 631.2L1006.3 625.1L1007.9 626.3L1006.6 629.2Q1007 631.4 1009 631L1010.7 630.2L1012.3 631.2L1007.4 637.6Z" fill="#1c1c1c"/><path d="M1011.8 624.9L1008.2 629.9" stroke="#1c1c1c" stroke-width="1"/><path d="M1013.2 627.1Q1018.2 629.5 1017.6 634.2Q1017 636 1015.6 635.6Q1016.4 631 1013.2 627.1Z" fill="#43a12d"/></svg>
<svg style="left:1085px;top:618px;" width="72" height="26" viewBox="1085 618 72 26"><defs><clipPath id="hk"><rect x="1135.6" y="623.7" width="14.6" height="14.6"/></clipPath></defs><path d="M1090.5 624.6H1097.6L1101.4 628.4V637.4H1090.5Z" fill="#fff" stroke="#111" stroke-width="1.2"/><path d="M1097.4 624.6V628.6H1101.4Z" fill="#111"/><path d="M1092.3 631.5H1099.8M1092.3 633.5H1099.8M1092.3 635.6H1097.8" stroke="#111" stroke-width="0.9"/><path d="M1089.2 628H1094.6" stroke="#43a12d" stroke-width="1.5"/><path d="M1093.6 626L1095.9 628L1093.6 630Z" fill="#43a12d"/><path d="M1112.4 623.2V638.5H1128" fill="none" stroke="#111" stroke-width="1.1"/><path d="M1114.2 632.3L1117.3 627.1L1120.3 629.9L1124.7 624.3L1126.7 625.4" fill="none" stroke="#666" stroke-width="1.1"/><path d="M1114.2 635.7Q1116.8 634.4 1119.2 633.7T1123.6 635.1T1126.7 633.7" fill="none" stroke="#43a12d" stroke-width="1.8"/><rect x="1135.5" y="623.6" width="14.8" height="14.8" fill="#fff" stroke="#b81c36" stroke-width="1.3"/><g clip-path="url(#hk)" stroke="#b81c36" stroke-width="1.05"><path d="M1135 623L1151 639M1142.7 623L1158.7 639M1127.3 623L1143.3 639M1148.4 623L1164.4 639M1121.6 623L1137.6 639"/></g></svg>
<!-- legend -->
<div style="left:953px;top:647px;width:22px;height:22px;border:3px solid #000;box-sizing:border-box;background:#fff;"></div>
<div class="leg" style="left:984px;top:650px;"><b style="color:#000;font-family:'DejaVu Sans',sans-serif;font-size:15px;">0.00</b>...<small>39.50</small></div>
<div class="sw" style="left:955px;top:671px;background:#ff3900;"></div>
<div class="leg" style="left:984px;top:672px;">39.50...<small>44.50</small></div>
<div class="sw" style="left:955px;top:693px;background:#ff7200;"></div>
<div class="leg" style="left:984px;top:694px;">44.50...<small>53.50</small></div>
<div class="sw" style="left:955px;top:715px;background:#ffaa00;"></div>
<div class="leg" style="left:984px;top:716px;">53.50...<small>59.00</small></div>
<div class="sw" style="left:955px;top:737px;background:#ffe300;"></div>
<div class="leg" style="left:984px;top:738px;">59.00...<small>64.00</small></div>
<div class="sw" style="left:955px;top:759px;background:#e3ff00;"></div>
<div class="leg" style="left:984px;top:760px;">64.00...<small>72.00</small></div>
<div style="left:954px;top:780px;width:21px;height:3px;overflow:hidden;"><div class="sw" style="left:1px;top:1px;background:#aaff00;"></div></div>
<!-- legend scrollbar -->
<div style="left:1245px;top:647px;width:16px;height:136px;background:#f0f0f0;"></div>
<svg style="left:1248.5px;top:652.3px;" width="8" height="7" viewBox="0 0 8 7"><path d="M0.9 5.7L4 2.1L7.1 5.7" stroke="#505050" stroke-width="2.1" fill="none"/></svg>
<div style="left:1245px;top:664px;width:15px;height:60px;background:#cdcdcd;"></div>
<svg style="left:1248.3px;top:771.3px;" width="8" height="7" viewBox="0 0 8 7"><path d="M0.9 1.3L4 4.9L7.1 1.3" stroke="#505050" stroke-width="2.1" fill="none"/></svg>
<div class="op" style="left:1266px;top:650px;">=</div>
<div class="op" style="left:1266px;top:674px;">+</div>
<div class="op" style="left:1266px;top:698px;">-</div>
<div class="op" style="left:1266px;top:722px;">#</div>
<svg style="left:1269px;top:761px;" width="17" height="16" viewBox="0 0 17 16"><path d="M1.5 9L6 14L15.5 1.5" fill="none" stroke="#3c9e28" stroke-width="2.4"/></svg>
<!-- Auswertung -->
<svg style="left:957px;top:791px;" width="9" height="10" viewBox="0 0 9 10"><path d="M1 1L4.5 4.2L8 1M1 5L4.5 8.2L8 5" stroke="#000" stroke-width="1.3" fill="none"/></svg>
<div class="t hd" style="left:975px;top:788px;">Auswertung</div>
<div class="hl" style="left:949px;top:803px;width:344px;background:#8a8a8a;"></div>
<div style="left:953px;top:806px;width:46px;height:22px;background:#f0f0f0;"></div>
<svg style="left:1002px;top:809px;" width="16" height="16" viewBox="0 0 16 16"><rect x="3.6" y="0.7" width="8.8" height="6" fill="#fff" stroke="#111" stroke-width="1.3"/><path d="M5.5 2.6H10.5M5.5 4.6H10.5" stroke="#3c9e28" stroke-width="1.1"/><rect x="0" y="5.5" width="16" height="7.5" rx="1.5" fill="#111"/><rect x="3.6" y="10" width="8.8" height="5.3" fill="#fff" stroke="#111" stroke-width="1.3"/></svg>
<svg style="left:1026px;top:809px;" width="16" height="16" viewBox="0 0 16 16"><path d="M1.6 1.7H8.6L12.4 5.5V14.6H1.6Z" fill="#fff" stroke="#111" stroke-width="1.3"/><path d="M8.4 1.7V5.7H12.4Z" fill="#111"/><path d="M3.2 6.5H8M3.2 8.7H10.8M3.2 10.6H10.8" stroke="#43a12d" stroke-width="1.1"/><path d="M6 12.5H12.4" stroke="#43a12d" stroke-width="1.5"/><path d="M11.4 10.6L13.8 12.5L11.4 14.4Z" fill="#43a12d"/></svg>
<!-- Details -->
<svg style="left:957px;top:835px;" width="10" height="9" viewBox="0 0 10 9"><path d="M1 1L4.2 4.5L1 8M5 1L8.2 4.5L5 8" stroke="#000" stroke-width="1.3" fill="none"/></svg>
<div class="t hd" style="left:975px;top:832px;">Details</div>
<div style="left:949px;top:847px;width:344px;height:5px;background:#f0f0f0;"></div>
<div class="hl" style="left:954px;top:850px;width:336px;background:#a0a0a0;"></div>
</div>
</body></html>
